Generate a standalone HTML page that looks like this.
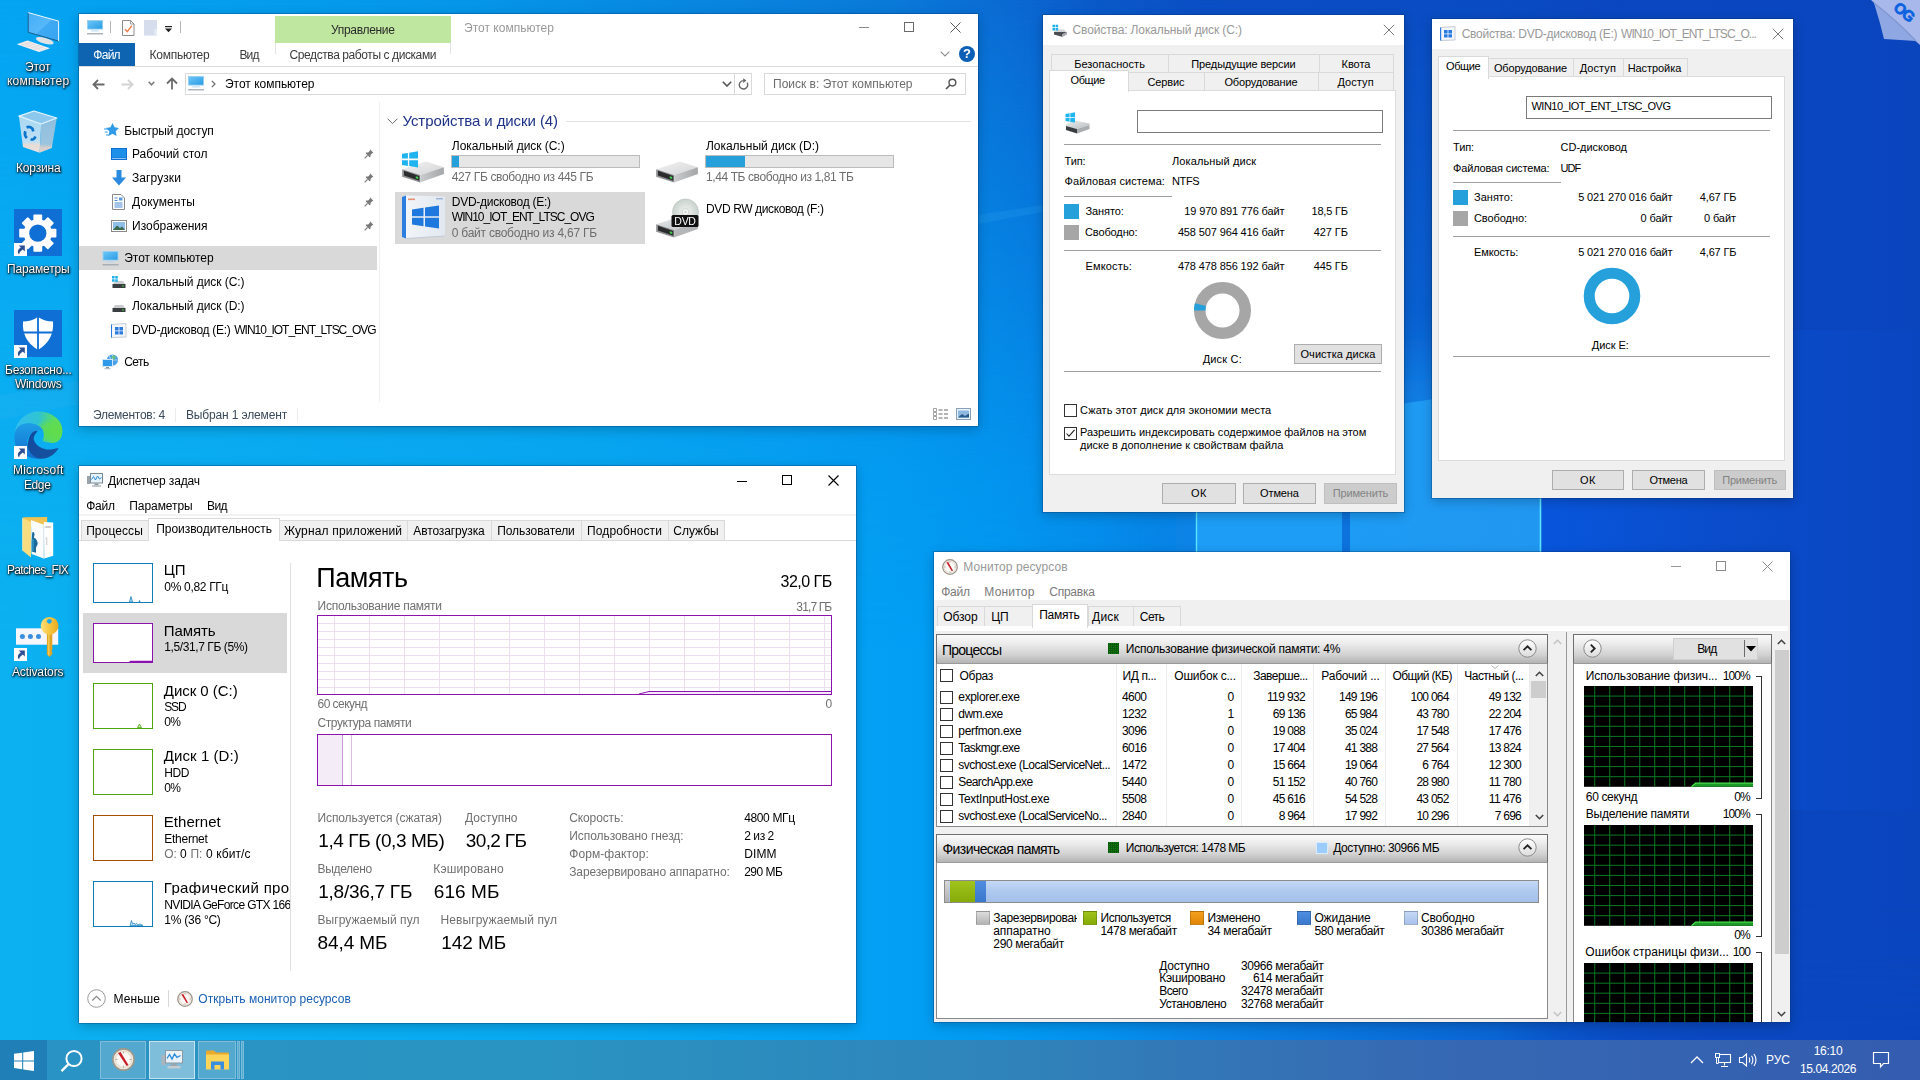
<!DOCTYPE html>
<html><head><meta charset="utf-8">
<style>
*{box-sizing:border-box;margin:0;padding:0}
html,body{width:1920px;height:1080px;overflow:hidden}
body{font-family:"Liberation Sans",sans-serif;font-size:12px;color:#000;position:relative;
background:
 linear-gradient(90deg,#12a9ef 0px,#0ea2ee 500px,#0b8fec 900px,#0a7de4 1150px,#0b6ad8 1250px,#0b55c8 1560px,#0a4ec4 1920px);}
.abs{position:absolute}
.win{position:absolute;background:#fff;box-shadow:0 0 0 1px rgba(0,50,110,.32),0 3px 11px rgba(0,0,0,.24)}
.t{position:absolute;white-space:nowrap;line-height:1}
/* wallpaper */
#wp{position:absolute;left:0;top:0;width:1920px;height:1080px;overflow:hidden}
/* taskbar */
#tb{position:absolute;left:0;top:1040px;width:1920px;height:40px;
 background:linear-gradient(90deg,#2a93c5 0,#2994c2 520px,#2f84bb 1000px,#366ab3 1400px,#345cb0 1920px)}
</style></head><body>
<div id="wp">
<div class="abs" style="left:0;top:0;width:1920px;height:1080px;background:linear-gradient(90deg,#0cb1f1 0,#08a9f2 600px,#03a0f5 880px,#029af2 1000px,#0491ee 1100px,#0983e5 1200px,#0a62d2 1520px,#0a50c6 1700px,#0a49c1 1920px)"></div>
<div class="abs" style="left:0;top:0;width:1920px;height:1080px;background:linear-gradient(90deg,#04a4f2 0,#0595e8 480px,#0a78d8 900px,#0a69d2 1010px,#0a58c8 1100px,#0a4ec4 1200px,#0a47be 1920px);-webkit-mask-image:linear-gradient(180deg,#000 0,rgba(0,0,0,.55) 230px,rgba(0,0,0,.12) 470px,transparent 650px);mask-image:linear-gradient(180deg,#000 0,rgba(0,0,0,.55) 230px,rgba(0,0,0,.12) 470px,transparent 650px)"></div>
<div class="abs" style="left:1500px;top:0;width:420px;height:1080px;background:linear-gradient(90deg,rgba(10,71,192,0) 0,#0a47c0 130px,#0a45be 420px);-webkit-mask-image:linear-gradient(180deg,#000 0,#000 900px,rgba(0,0,0,.7) 1080px)"></div>
<svg class="abs" style="left:0;top:0" width="1920" height="1080" viewBox="0 0 1920 1080">
<defs><filter id="bl" x="-20%" y="-20%" width="140%" height="140%"><feGaussianBlur stdDeviation="30"/></filter>
<linearGradient id="pg" x1="0" y1="0" x2="1" y2="0"><stop offset="0" stop-color="#1d9cf5"/><stop offset="1" stop-color="#2197f1"/></linearGradient></defs>
<polygon points="1196,395 1545,340 1545,790 1196,745" fill="#1590f0" opacity=".6" filter="url(#bl)"/>
<polygon points="0,395 978,215 1043,205 1043,212 978,224 0,420" fill="#3fb4f4" opacity=".16"/>
<polygon points="1196,432 1342,412 1342,720 1196,705" fill="#1d9df6"/>
<polygon points="1342,412 1350,411 1350,722 1342,720" fill="#0d72dc"/>
<polygon points="1350,411 1540,384 1540,760 1350,722" fill="url(#pg)"/>
<line x1="1196.5" y1="432" x2="1196.500" y2="705" stroke="#5ae6fa" stroke-width="1.4"/>
<defs><linearGradient id="rg" x1="0" y1="0" x2="1" y2="0"><stop offset="0" stop-color="#0856dc"/><stop offset=".45" stop-color="#0a4dcc"/><stop offset="1" stop-color="#0a45c0"/></linearGradient></defs>
<rect x="1541" y="330" width="379" height="480" fill="url(#rg)"/>
<line x1="1540.5" y1="384" x2="1540.500" y2="760" stroke="#5ae6fa" stroke-width="1.6"/>
</svg>
<svg class="abs" style="left:1866px;top:0" width="54" height="48" viewBox="0 0 54 48">
<polygon points="5,0 54,0 54,45" fill="#a9b8ea"/>
<path d="M8 3Q14 22 18 39L50 41Q30 20 8 3z" fill="#8fa8e3"/><path d="M8 3Q30 20 50 41" fill="none" stroke="#7f96d2" stroke-width="1.2"/>
<g transform="translate(38 12) rotate(40)"><text x="0" y="5" text-anchor="middle" font-family="Liberation Sans" font-weight="bold" font-size="15" fill="#0a62e0" stroke="#0a62e0" stroke-width=".8" letter-spacing="-1">OG</text></g>
</svg>
</div>
<svg class="abs" style="left:14px;top:8px;" width="50" height="46" viewBox="0 0 50 46"><defs><linearGradient id="pc1" x1="0" y1="0" x2="1" y2="1"><stop offset="0" stop-color="#45aef6"/><stop offset=".5" stop-color="#56b8fa"/><stop offset=".52" stop-color="#3fa9f3"/><stop offset="1" stop-color="#38a4f0"/></linearGradient></defs>
<g transform="rotate(16 30.8 32.8)"><ellipse cx="30.8" cy="32.8" rx="9.200" ry="2.900" fill="#dfe3e6"/></g>
<path d="M14.2 4.6 44.600 13.100V33.100L14.200 24.300z" fill="url(#pc1)"/>
<path d="M14.2 4.600V24.300L44.600 33.100" fill="none" stroke="#1d5f8f" stroke-width="1"/><path d="M14.2 4.600 44.600 13.100V33.100" fill="none" stroke="#eaf6fe" stroke-width="1"/>
<path d="M2.8 36.200 13.500 32.600 36 40.300 25.100 44z" fill="#f2f5f8"/>
<g stroke="#d9c8c4" stroke-width=".5" fill="none"><path d="M5.500 35.300 27.800 43.100M8.200 34.400 30.500 42.200M10.800 33.500 33.200 41.300"/><path d="M7 37.600 17.700 34M11.200 39.100 21.900 35.500M15.400 40.600 26.100 37M19.600 42.100 30.300 38.500"/></g></svg>
<div class="t" style="left:24.80px;top:60.84px;font-size:12px;color:#fff;letter-spacing:-0.102px;text-shadow:0 0 1px #000,1px 1px 2px #000,0 1px 3px rgba(0,0,0,.8);will-change:transform;">Этот</div>
<div class="t" style="left:6.60px;top:75.04px;font-size:12px;color:#fff;letter-spacing:0.209px;text-shadow:0 0 1px #000,1px 1px 2px #000,0 1px 3px rgba(0,0,0,.8);will-change:transform;">компьютер</div>
<svg class="abs" style="left:18px;top:109px;" width="40" height="46" viewBox="0 0 40 46"><defs><linearGradient id="rbl" x1="0" y1="0" x2="0" y2="1"><stop offset="0" stop-color="#a9d7f3"/><stop offset=".7" stop-color="#bfe0f4"/><stop offset=".78" stop-color="#e6dcd8"/><stop offset="1" stop-color="#e9e2de"/></linearGradient>
<linearGradient id="rbr" x1="0" y1="0" x2="0" y2="1"><stop offset="0" stop-color="#8dbfe0"/><stop offset=".75" stop-color="#9cc4de"/><stop offset=".85" stop-color="#d6cfcc"/><stop offset="1" stop-color="#d8d2d0"/></linearGradient></defs>
<path d="M.9 7.200 23.200 15 21.600 43.800 5 38z" fill="url(#rbl)"/><path d="M23.200 15 38.800 9 33.800 39.100 21.600 43.800z" fill="url(#rbr)"/>
<path d="M.9 7.200 15.900 2 38.800 9 23.200 15z" fill="#8cc8ee" stroke="#e4f4fd" stroke-width="1.300" stroke-linejoin="round"/>
<g fill="none" stroke="#0b74cc" stroke-width="2.700"><path d="M8.600 18.500Q11.500 17 14.500 19.800L15.300 22.400"/><path d="M7.300 22.200Q6 26 8.800 29.200"/><path d="M12.600 30.200Q16 31.500 17.400 27.500"/></g></svg>
<div class="t" style="left:15.66px;top:161.74px;font-size:12px;color:#fff;letter-spacing:-0.174px;text-shadow:0 0 1px #000,1px 1px 2px #000,0 1px 3px rgba(0,0,0,.8);will-change:transform;">Корзина</div>
<div class="abs" style="left:14.3px;top:209px;width:47.7px;height:46.7px;background:#0f6fd4;"></div>
<svg class="abs" style="left:14.3px;top:209px;" width="48" height="47" viewBox="0 0 48 47"><g transform="translate(23.8,24.2)"><g fill="#fff"><rect x="-4.4" y="-18.6" width="8.8" height="9" rx=".8" transform="rotate(0)"/><rect x="-4.4" y="-18.6" width="8.8" height="9" rx=".8" transform="rotate(45)"/><rect x="-4.4" y="-18.6" width="8.8" height="9" rx=".8" transform="rotate(90)"/><rect x="-4.4" y="-18.6" width="8.8" height="9" rx=".8" transform="rotate(135)"/><rect x="-4.4" y="-18.6" width="8.8" height="9" rx=".8" transform="rotate(180)"/><rect x="-4.4" y="-18.6" width="8.8" height="9" rx=".8" transform="rotate(225)"/><rect x="-4.4" y="-18.6" width="8.8" height="9" rx=".8" transform="rotate(270)"/><rect x="-4.4" y="-18.6" width="8.8" height="9" rx=".8" transform="rotate(315)"/><circle r="14"/></g><circle r="8.6" fill="#0f6fd4"/></g></svg>
<svg class="abs" style="left:14.3px;top:243px;" width="13" height="13" viewBox="0 0 13 13"><rect width="13" height="13" fill="#fbfbfb"/><path d="M4.800 2.400H10.800V8.400L8.800 6.400Q5.800 8 5 11.600Q2 7.500 6.800 4.400z" fill="#2c4f94"/></svg>
<div class="t" style="left:6.87px;top:262.64px;font-size:12px;color:#fff;letter-spacing:-0.163px;text-shadow:0 0 1px #000,1px 1px 2px #000,0 1px 3px rgba(0,0,0,.8);will-change:transform;">Параметры</div>
<div class="abs" style="left:14.3px;top:310.2px;width:47.7px;height:47.2px;background:#0f6fd4;"></div>
<svg class="abs" style="left:14.3px;top:310.2px;" width="48" height="47" viewBox="0 0 48 47"><path d="M24 7Q17 11.5 9 11.5 7.5 30 24 40 40.5 30 39 11.5 31 11.5 24 7z" fill="#fff"/><path d="M24 6V41M8 22.5H40" stroke="#0f6fd4" stroke-width="1.8"/></svg>
<svg class="abs" style="left:14.3px;top:344.5px;" width="13" height="13" viewBox="0 0 13 13"><rect width="13" height="13" fill="#fbfbfb"/><path d="M4.800 2.400H10.800V8.400L8.800 6.400Q5.800 8 5 11.600Q2 7.500 6.800 4.400z" fill="#2c4f94"/></svg>
<div class="t" style="left:4.56px;top:363.54px;font-size:12px;color:#fff;letter-spacing:-0.176px;text-shadow:0 0 1px #000,1px 1px 2px #000,0 1px 3px rgba(0,0,0,.8);will-change:transform;">Безопасно...</div>
<div class="t" style="left:14.68px;top:378.04px;font-size:12px;color:#fff;letter-spacing:-0.341px;text-shadow:0 0 1px #000,1px 1px 2px #000,0 1px 3px rgba(0,0,0,.8);will-change:transform;">Windows</div>
<svg class="abs" style="left:13.5px;top:410.5px;" width="50" height="50" viewBox="0 0 50 50"><defs><linearGradient id="e1" x1="0" y1="0" x2="1" y2="0"><stop offset="0" stop-color="#33bdf0"/><stop offset=".5" stop-color="#2fc4d4"/><stop offset=".8" stop-color="#55d870"/><stop offset="1" stop-color="#6fe04a"/></linearGradient>
<radialGradient id="e1b" cx=".82" cy=".62" r=".42"><stop offset="0" stop-color="#62dc4a"/><stop offset=".6" stop-color="#5fdc50" stop-opacity=".8"/><stop offset="1" stop-color="#5fdc50" stop-opacity="0"/></radialGradient>
<linearGradient id="e2" x1="0" y1="0" x2="0" y2="1"><stop offset="0" stop-color="#1e9ee6"/><stop offset="1" stop-color="#136fd0"/></linearGradient>
<linearGradient id="e3" x1="0" y1="0" x2="1" y2="1"><stop offset="0" stop-color="#124a9e"/><stop offset="1" stop-color="#17529f"/></linearGradient></defs>
<path d="M.8 22.400C2 8 14 .4 24.200 .4C38 .4 48.300 9 48.300 19.600C48.300 28 44 32 38 32C32 32 28.600 30.500 28.600 29.100C30 27 30.500 24 29.200 19.600C27 14 20 12 12 12.500C6 14 2 18 .8 22.400Z" fill="url(#e1)"/>
<path d="M.8 22.400C2 8 14 .4 24.200 .4C38 .4 48.300 9 48.300 19.600C48.300 28 44 32 38 32C32 32 28.600 30.500 28.600 29.100C30 27 30.500 24 29.200 19.600C27 14 20 12 12 12.500C6 14 2 18 .8 22.400Z" fill="url(#e1b)"/>
<path d="M.8 22.400C2 16 7 12.400 12 12.400C18 11.500 25 13 29.200 19.600C26 19 21 19.500 18.600 21.300C13 25 12.500 31 13.900 34C15 40 19 45 25.800 47.700C16 48.500 6 42 1.900 35.200C.3 31 .2 26 .8 22.400Z" fill="url(#e2)"/>
<path d="M18.600 21.300C20 20.300 22 19.800 23.600 20.200C20 24 19 27 20.300 30C23 36 30 39 37 38.500C41 38 43.500 37.300 44.700 36.800C41 44 33 48.500 25.800 47.700C18 46 13 39 13.900 32.400C14.500 27 16 23.500 18.600 21.300Z" fill="url(#e3)"/></svg>
<svg class="abs" style="left:14.3px;top:446px;" width="13" height="13" viewBox="0 0 13 13"><rect width="13" height="13" fill="#fbfbfb"/><path d="M4.800 2.400H10.800V8.400L8.800 6.400Q5.800 8 5 11.600Q2 7.500 6.800 4.400z" fill="#2c4f94"/></svg>
<div class="t" style="left:12.65px;top:464.14px;font-size:12px;color:#fff;letter-spacing:0.201px;text-shadow:0 0 1px #000,1px 1px 2px #000,0 1px 3px rgba(0,0,0,.8);will-change:transform;">Microsoft</div>
<div class="t" style="left:24.20px;top:479.44px;font-size:12px;color:#fff;letter-spacing:-0.408px;text-shadow:0 0 1px #000,1px 1px 2px #000,0 1px 3px rgba(0,0,0,.8);will-change:transform;">Edge</div>
<svg class="abs" style="left:21px;top:515px;" width="35" height="45" viewBox="0 0 35 45"><path d="M1.700 2.200 26.100 1.900V12L10 12z" fill="#efc252"/>
<path d="M10 4.900 22.800 9.700V43.600L10.600 39.100z" fill="#fbfcfe"/><path d="M22.800 6.900 32.200 7.400V40.800L23.300 43.600z" fill="#fff"/><path d="M22.800 9.700V43.600" stroke="#dfe5ee" stroke-width=".8"/>
<path d="M11.200 17.500Q13 16 13.600 19.500L12.800 22.500Q16.500 24 16.700 29L15 32.500V37.800L10.800 36.500Q10.400 26 11.200 17.500z" fill="#1b6a9c"/><path d="M12 24V36" stroke="#39a0d0" stroke-width="1.200"/>
<path d="M24.200 12H29.800" stroke="#9a9088" stroke-width=".9"/><path d="M24.500 23.500 25.800 22.500V30" stroke="#c9c4cc" stroke-width=".9" fill="none"/>
<path d="M1.700 3 10 6.900V42.400L1.700 35.800z" fill="#f7dc80"/><path d="M1.700 3V35.800" stroke="#fbeaa8" stroke-width=".9"/></svg>
<div class="t" style="left:7.10px;top:564.44px;font-size:12px;color:#fff;letter-spacing:-0.691px;text-shadow:0 0 1px #000,1px 1px 2px #000,0 1px 3px rgba(0,0,0,.8);will-change:transform;">Patches_FIX</div>
<svg class="abs" style="left:15px;top:616px;" width="46" height="45" viewBox="0 0 46 45"><defs><linearGradient id="ky" x1="0" y1="0" x2="1" y2="0"><stop offset="0" stop-color="#fbe07a"/><stop offset=".5" stop-color="#f6c640"/><stop offset="1" stop-color="#e9aa22"/></linearGradient></defs>
<rect x="1" y="12.300" width="42.200" height="16.400" fill="#f5f6fc"/><circle cx="7.400" cy="20.600" r="2.500" fill="#3a8ee0"/><circle cx="15.400" cy="20.600" r="2.500" fill="#3a8ee0"/><circle cx="23.500" cy="20.600" r="2.500" fill="#3a8ee0"/>
<path d="M31.900 17V38.500L34.600 41 37.300 38V36L36.300 35 37.300 34V17z" fill="#e2a526"/><path d="M33.800 17V39.500" stroke="#f7d25c" stroke-width="1.200"/>
<circle cx="34.600" cy="9.800" r="8.900" fill="url(#ky)"/><circle cx="34.300" cy="5.300" r="2.400" fill="#18a8f4"/></svg>
<svg class="abs" style="left:14.3px;top:648px;" width="13" height="13" viewBox="0 0 13 13"><rect width="13" height="13" fill="#fbfbfb"/><path d="M4.800 2.400H10.800V8.400L8.800 6.400Q5.800 8 5 11.600Q2 7.500 6.800 4.400z" fill="#2c4f94"/></svg>
<div class="t" style="left:12.44px;top:665.84px;font-size:12px;color:#fff;letter-spacing:-0.129px;text-shadow:0 0 1px #000,1px 1px 2px #000,0 1px 3px rgba(0,0,0,.8);will-change:transform;">Activators</div>
<div class="win" style="left:79px;top:14px;width:899px;height:412px"></div>
<svg class="abs" style="left:87px;top:20px;" width="16" height="14.6" viewBox="0 0 16 14.6"><defs><linearGradient id="mg75836" x1="0" y1="0" x2="1" y2="1"><stop offset="0" stop-color="#6cc6f6"/><stop offset="1" stop-color="#2a9ce6"/></linearGradient></defs>
<rect x="0" y="0" width="16" height="9.6" fill="#9fd2f2"/><rect x="0.9" y="0.9" width="14.2" height="7.8" fill="url(#mg75836)"/>
<rect x="4.2" y="10.4" width="7.6" height="1" fill="#b4d6ee"/><rect x="0" y="13.2" width="16" height="1.2" fill="#9ba3ab"/></svg>
<div class="abs" style="left:110px;top:21px;width:1px;height:12px;background:#b5b5b5;"></div>
<svg class="abs" style="left:122px;top:20px;" width="12.5" height="16" viewBox="0 0 12.5 16"><path d="M.5 .5h8l3.500 3.500v11.500h-11.500z" fill="#fff" stroke="#8c8c8c"/><path d="M8.500 .5v3.500h3.500" fill="none" stroke="#8c8c8c" stroke-width=".8"/><path d="M3 9.200 5.300 11.600 9.800 5.800" fill="none" stroke="#ef7d4f" stroke-width="1.400"/></svg>
<svg class="abs" style="left:144px;top:20px;" width="13" height="15.6" viewBox="0 0 13 15.6"><rect width="13" height="15.600" fill="#d6deee"/><rect x="10.400" y="9" width="2.600" height="6.600" fill="#e6ecf6"/></svg>
<svg class="abs" style="left:165px;top:25.5px;" width="7" height="7" viewBox="0 0 7 7"><rect x="0" y="0" width="7" height="1.200" fill="#222"/><path d="M0 2.600h7L3.500 6.200z" fill="#222"/></svg>
<div class="abs" style="left:180px;top:21px;width:1px;height:12px;background:#b5b5b5;"></div>
<div class="abs" style="left:275px;top:16px;width:176px;height:27px;background:#c0e79f;"></div>
<div class="t" style="left:331.09px;top:24.14px;font-size:12px;color:#2a2a2a;letter-spacing:-0.322px;">Управление</div>
<div class="t" style="left:464.00px;top:22.14px;font-size:12px;color:#9a9a9a;letter-spacing:0.019px;">Этот компьютер</div>
<div class="abs" style="left:859px;top:27px;width:10px;height:1px;background:#8a8a8a;"></div>
<div class="abs" style="left:904px;top:22px;width:10px;height:10px;border:1px solid #6a6a6a;"></div>
<svg class="abs" style="left:950px;top:22px;" width="11" height="11" viewBox="0 0 11 11"><path d="M.5 .5 10.5 10.5M10.5 .5 .5 10.5" stroke="#555" stroke-width="1"/></svg>
<div class="abs" style="left:79px;top:43px;width:56px;height:23px;background:#0f64b2;"></div>
<div class="t" style="left:93.37px;top:49.14px;font-size:12px;color:#fff;letter-spacing:-0.754px;">Файл</div>
<div class="t" style="left:149.50px;top:49.14px;font-size:12px;color:#3b3b3b;letter-spacing:-0.234px;">Компьютер</div>
<div class="t" style="left:239.50px;top:49.14px;font-size:12px;color:#3b3b3b;letter-spacing:-0.906px;">Вид</div>
<div class="abs" style="left:275px;top:43px;width:1px;height:11px;background:#e3e3e3;"></div>
<div class="abs" style="left:450px;top:43px;width:1px;height:11px;background:#e3e3e3;"></div>
<div class="t" style="left:289.54px;top:49.14px;font-size:12px;color:#3b3b3b;letter-spacing:-0.411px;">Средства работы с дисками</div>
<svg class="abs" style="left:940px;top:51px;" width="10" height="6" viewBox="0 0 10 6"><path d="M.7 .7 5 5 9.3 .7" fill="none" stroke="#8a8a8a" stroke-width="1.1"/></svg>
<svg class="abs" style="left:958px;top:45px;" width="18" height="18" viewBox="0 0 18 18"><circle cx="9" cy="9" r="8" fill="#0c5fb6"/><text x="9" y="13.4" text-anchor="middle" font-family="Liberation Sans" font-weight="bold" font-size="13" fill="#fff">?</text></svg>
<div class="abs" style="left:79px;top:66px;width:899px;height:1px;background:#dadbdc;"></div>
<svg class="abs" style="left:92px;top:79px;" width="13" height="11" viewBox="0 0 13 11"><path d="M12.5 5.5H1.500M6 1 1.500 5.500 6 10" fill="none" stroke="#6b6b6b" stroke-width="1.800"/></svg>
<svg class="abs" style="left:121px;top:79px;" width="13" height="11" viewBox="0 0 13 11"><path d="M.5 5.5H11.500M7 1 11.500 5.500 7 10" fill="none" stroke="#d4d4d4" stroke-width="1.800"/></svg>
<svg class="abs" style="left:148px;top:81px;" width="7" height="5" viewBox="0 0 7 5"><path d="M.7 .8 3.500 3.800 6.300 .8" fill="none" stroke="#7a7a7a" stroke-width="1.500"/></svg>
<svg class="abs" style="left:166px;top:77px;" width="12" height="13" viewBox="0 0 12 13"><path d="M6 12.500V1.500M1 6.500 6 1.500 11 6.500" fill="none" stroke="#6b6b6b" stroke-width="1.800"/></svg>
<div class="abs" style="left:185px;top:73px;width:550px;height:22px;border:1px solid #d9d9d9;"></div>
<div class="abs" style="left:734px;top:73px;width:18px;height:22px;border:1px solid #d9d9d9;"></div>
<svg class="abs" style="left:188px;top:76px;" width="16" height="14.6" viewBox="0 0 16 14.6"><defs><linearGradient id="mg11883" x1="0" y1="0" x2="1" y2="1"><stop offset="0" stop-color="#6cc6f6"/><stop offset="1" stop-color="#2a9ce6"/></linearGradient></defs>
<rect x="0" y="0" width="16" height="9.6" fill="#9fd2f2"/><rect x="0.9" y="0.9" width="14.2" height="7.8" fill="url(#mg11883)"/>
<rect x="4.2" y="10.4" width="7.6" height="1" fill="#b4d6ee"/><rect x="0" y="13.2" width="16" height="1.2" fill="#9ba3ab"/></svg>
<svg class="abs" style="left:211px;top:80px;" width="5" height="8" viewBox="0 0 5 8"><path d="M.8 .8 4 4 .8 7.2" fill="none" stroke="#6a6a6a" stroke-width="1.2"/></svg>
<div class="t" style="left:225.00px;top:78.14px;font-size:12px;color:#000;letter-spacing:-0.017px;">Этот компьютер</div>
<svg class="abs" style="left:722px;top:81px;" width="10" height="6" viewBox="0 0 10 6"><path d="M.8 .8 5 5 9.2 .8" fill="none" stroke="#555" stroke-width="1.6"/></svg>
<svg class="abs" style="left:738px;top:78px;" width="11" height="12" viewBox="0 0 11 12"><path d="M9.140 4.700A4.200 4.200 0 1 1 5.500 2.600" fill="none" stroke="#666" stroke-width="1.400"/><path d="M5.200 .2 8.400 2.600 5.200 5z" fill="#666"/></svg>
<div class="abs" style="left:764px;top:73px;width:202px;height:22px;border:1px solid #d9d9d9;"></div>
<div class="t" style="left:773.00px;top:78.14px;font-size:12px;color:#6d6d6d;letter-spacing:0.006px;">Поиск в: Этот компьютер</div>
<svg class="abs" style="left:945px;top:78px;" width="12" height="12" viewBox="0 0 12 12"><circle cx="7.4" cy="4.6" r="3.4" fill="none" stroke="#555" stroke-width="1.4"/><path d="M5 7 1 11" stroke="#555" stroke-width="1.7"/></svg>
<div class="abs" style="left:379px;top:102px;width:1px;height:300px;background:#f0f0f0;"></div>
<svg class="abs" style="left:104px;top:123px;" width="15" height="14" viewBox="0 0 15 14"><path d="M8.5 0 10.6 4.3 15 5 11.7 8.2 12.6 13 8.5 10.7 4.6 13 5.4 8.2 2 5 6.5 4.3z" fill="#2f9be8"/><path d="M0 6h4M.8 9h3M2 12h3" stroke="#2f9be8" stroke-width="1.1"/></svg>
<div class="t" style="left:124.20px;top:124.64px;font-size:12px;color:#000;letter-spacing:-0.117px;">Быстрый доступ</div>
<svg class="abs" style="left:111px;top:148px;" width="16" height="12" viewBox="0 0 16 12"><rect x="0" y="0" width="16" height="12" fill="#0d6fd1"/><rect x="1" y="1" width="14" height="8.6" fill="#1f90e8"/><rect x="1" y="10" width="14" height="1" fill="#8fc4f3" stroke-dasharray="2 1"/></svg>
<div class="t" style="left:132.00px;top:148.14px;font-size:12px;color:#000;letter-spacing:0.014px;">Рабочий стол</div>
<svg class="abs" style="left:111px;top:170px;" width="16" height="16" viewBox="0 0 16 16"><path d="M5.5 0h5v7.5h4.5L8 15.5 1 7.5h4.5z" fill="#2a8ae0"/></svg>
<div class="t" style="left:132.00px;top:172.14px;font-size:12px;color:#000;letter-spacing:0.088px;">Загрузки</div>
<svg class="abs" style="left:112px;top:194px;" width="13" height="16" viewBox="0 0 13 16"><path d="M.5 .5h8.5l3.5 3.5v11.5h-12z" fill="#fff" stroke="#8a8a8a"/><path d="M2.5 4h3M2.5 6.5h3M2.5 9h8M2.5 11h8M2.5 13h8" stroke="#4a8ad4" stroke-width="1"/><path d="M7 3.5h3.5v3H7z" fill="#5a9be0"/></svg>
<div class="t" style="left:132.00px;top:196.14px;font-size:12px;color:#000;letter-spacing:0.127px;">Документы</div>
<svg class="abs" style="left:111px;top:220px;" width="16" height="12" viewBox="0 0 16 12"><rect x=".5" y=".5" width="15" height="11" fill="#fff" stroke="#8a8a8a"/><rect x="2" y="2" width="12" height="8" fill="#8fc0ea"/><path d="M2 10 6 5.5 9 8 11 6.5 14 10z" fill="#3a6a4a"/></svg>
<div class="t" style="left:132.00px;top:220.14px;font-size:12px;color:#000;letter-spacing:0.007px;">Изображения</div>
<svg class="abs" style="left:364px;top:149px;" width="10" height="10" viewBox="0 0 10 10"><path d="M6.2 .6 9.4 3.8 8.3 4.2 6.6 5.9 6.4 8 5.5 8.2 1.8 4.5 2 3.600 4.1 3.4 5.8 1.700z" fill="#7a7a7a"/><path d="M3.600 6.4 .6 9.4" stroke="#7a7a7a" stroke-width="1.1"/></svg>
<svg class="abs" style="left:364px;top:173px;" width="10" height="10" viewBox="0 0 10 10"><path d="M6.2 .6 9.4 3.8 8.3 4.2 6.6 5.9 6.4 8 5.5 8.2 1.8 4.5 2 3.600 4.1 3.4 5.8 1.700z" fill="#7a7a7a"/><path d="M3.600 6.4 .6 9.4" stroke="#7a7a7a" stroke-width="1.1"/></svg>
<svg class="abs" style="left:364px;top:197px;" width="10" height="10" viewBox="0 0 10 10"><path d="M6.2 .6 9.4 3.8 8.3 4.2 6.6 5.9 6.4 8 5.5 8.2 1.8 4.5 2 3.600 4.1 3.4 5.8 1.700z" fill="#7a7a7a"/><path d="M3.600 6.4 .6 9.4" stroke="#7a7a7a" stroke-width="1.1"/></svg>
<svg class="abs" style="left:364px;top:221px;" width="10" height="10" viewBox="0 0 10 10"><path d="M6.2 .6 9.4 3.8 8.3 4.2 6.6 5.9 6.4 8 5.5 8.2 1.8 4.5 2 3.600 4.1 3.4 5.8 1.700z" fill="#7a7a7a"/><path d="M3.600 6.4 .6 9.4" stroke="#7a7a7a" stroke-width="1.1"/></svg>
<div class="abs" style="left:79px;top:246px;width:298px;height:24px;background:#d9d9d9;"></div>
<svg class="abs" style="left:102px;top:251px;" width="17" height="14.6" viewBox="0 0 16 14.6"><defs><linearGradient id="mg41265" x1="0" y1="0" x2="1" y2="1"><stop offset="0" stop-color="#6cc6f6"/><stop offset="1" stop-color="#2a9ce6"/></linearGradient></defs>
<rect x="0" y="0" width="16" height="9.6" fill="#9fd2f2"/><rect x="0.9" y="0.9" width="14.2" height="7.8" fill="url(#mg41265)"/>
<rect x="4.2" y="10.4" width="7.6" height="1" fill="#b4d6ee"/><rect x="0" y="13.2" width="16" height="1.2" fill="#9ba3ab"/></svg>
<div class="t" style="left:124.20px;top:252.14px;font-size:12px;color:#000;letter-spacing:-0.017px;">Этот компьютер</div>
<svg class="abs" style="left:111px;top:275px;" width="16" height="14" viewBox="0 0 16 14"><path d="M2 9 4 6h8l2 3z" fill="#c9cdd0"/><rect x="1.5" y="9" width="13" height="4" fill="#3a3d40"/><rect x="11" y="10.5" width="2" height="1" fill="#3fd23f"/><path d="M1 1h2.6v2.6H1zM4.2 1h2.6v2.6H4.2zM1 4.2h2.6v2.6H1zM4.2 4.2h2.6v2.6H4.2z" fill="#1fb0ea"/></svg>
<div class="t" style="left:132.00px;top:276.14px;font-size:12px;color:#000;letter-spacing:-0.056px;">Локальный диск (C:)</div>
<svg class="abs" style="left:111px;top:299px;" width="16" height="14" viewBox="0 0 16 14"><path d="M2 9 4 6h8l2 3z" fill="#c9cdd0"/><rect x="1.5" y="9" width="13" height="4" fill="#3a3d40"/><rect x="11" y="10.5" width="2" height="1" fill="#3fd23f"/></svg>
<div class="t" style="left:132.00px;top:300.14px;font-size:12px;color:#000;letter-spacing:-0.056px;">Локальный диск (D:)</div>
<svg class="abs" style="left:111px;top:323px;" width="16" height="15" viewBox="0 0 16 15"><path d="M.5 1.5 15 .5V14L.5 14.5z" fill="#f4f6f9" stroke="#b8c0cc" stroke-width=".8"/><path d="M4 4h3.6v3.4H4zM8.4 4H12v3.4H8.4zM4 8.2h3.6v3.4H4zM8.4 8.2H12v3.4H8.4z" fill="#2a7be0"/><path d="M.5 1.5v13" stroke="#2a7be0" stroke-width="1"/></svg>
<div class="t" style="left:132.00px;top:324.14px;font-size:12px;color:#000;letter-spacing:-0.290px;">DVD-дисковод (E:)</div>
<div class="t" style="left:234.30px;top:324.14px;font-size:12px;color:#000;letter-spacing:-1.029px;">WIN10_IOT_ENT_LTSC_OVG</div>
<svg class="abs" style="left:102px;top:354px;" width="17" height="16" viewBox="0 0 17 16"><circle cx="10.5" cy="6" r="5.6" fill="#4aa0e6"/><path d="M7 2q3.5 4 0 8M5 6h11M10.5 .5v11" stroke="#bfe0f8" stroke-width=".8" fill="none"/><path d="M9 3 12 1 14 3 12.5 6z" fill="#6bc26b" opacity=".8"/><rect x=".5" y="5.5" width="10" height="7" fill="#2f9be8" stroke="#cfe6f8" stroke-width="1"/><rect x="4" y="13" width="3" height="1.2" fill="#8a969e"/><rect x="2.5" y="14.2" width="6" height="1" fill="#aab4bb"/></svg>
<div class="t" style="left:124.20px;top:356.14px;font-size:12px;color:#000;letter-spacing:-0.551px;">Сеть</div>
<svg class="abs" style="left:387px;top:118px;" width="11" height="7" viewBox="0 0 11 7"><path d="M.6 .7 5.5 5.6 10.4 .7" fill="none" stroke="#6a6a6a" stroke-width="1"/></svg>
<div class="t" style="left:402.50px;top:113.17px;font-size:15px;color:#1e3287;letter-spacing:-0.080px;">Устройства и диски (4)</div>
<div class="abs" style="left:566px;top:121px;width:405px;height:1px;background:#e2e2e2;"></div>
<svg class="abs" style="left:401px;top:150px;" width="44" height="34" viewBox="0 0 44 34"><defs><linearGradient id="dtc" x1="0" y1="0" x2="1" y2="1"><stop offset="0" stop-color="#f2f2f3"/><stop offset="1" stop-color="#d4d5d6"/></linearGradient>
<linearGradient id="drc" x1="0" y1="0" x2="1" y2="0"><stop offset="0" stop-color="#cbcccd"/><stop offset="1" stop-color="#a4a6a8"/></linearGradient></defs>
<path d="M1.200 19.300 25 11.400 42.900 17.200 19.100 25z" fill="url(#dtc)"/>
<path d="M1.200 19.300 19.100 25V32.600L1.200 26.700z" fill="#8d8f91"/>
<path d="M3 20.700 18.300 25.900V30.700L3 25.600z" fill="#2b2c2e"/>
<path d="M19.100 25 42.900 17.200V24L19.100 32.600z" fill="url(#drc)"/>
<path d="M14.800 26.300 17.200 27.100V29.100L14.800 28.300z" fill="#41d64c"/><path d="M1 3.700 6.900 2.900V8.600H1zM8.200 2.700 17 1.250V8.600H8.200zM1 10.200H6.900V15.900L1 15.100zM8.200 10.200H17V17.600L8.200 16.100z" fill="#1fb4ee"/></svg>
<div class="t" style="left:451.80px;top:140.14px;font-size:12px;color:#000;letter-spacing:-0.040px;">Локальный диск (C:)</div>
<div class="abs" style="left:451px;top:155px;width:189px;height:13px;background:#e6e6e6;border:1px solid #bcbcbc;"></div>
<div class="abs" style="left:452px;top:156px;width:7px;height:11px;background:#26a0da;"></div>
<div class="t" style="left:451.80px;top:171.14px;font-size:12px;color:#6d6d6d;letter-spacing:-0.347px;">427 ГБ свободно из 445 ГБ</div>
<svg class="abs" style="left:655px;top:150px;" width="44" height="34" viewBox="0 0 44 34"><defs><linearGradient id="dtd" x1="0" y1="0" x2="1" y2="1"><stop offset="0" stop-color="#f2f2f3"/><stop offset="1" stop-color="#d4d5d6"/></linearGradient>
<linearGradient id="drd" x1="0" y1="0" x2="1" y2="0"><stop offset="0" stop-color="#cbcccd"/><stop offset="1" stop-color="#a4a6a8"/></linearGradient></defs>
<path d="M1.200 19.300 25 11.400 42.900 17.200 19.100 25z" fill="url(#dtd)"/>
<path d="M1.200 19.300 19.100 25V32.600L1.200 26.700z" fill="#8d8f91"/>
<path d="M3 20.700 18.300 25.900V30.700L3 25.600z" fill="#2b2c2e"/>
<path d="M19.100 25 42.900 17.200V24L19.100 32.600z" fill="url(#drd)"/>
<path d="M14.800 26.300 17.200 27.100V29.100L14.800 28.300z" fill="#41d64c"/></svg>
<div class="t" style="left:706.00px;top:140.14px;font-size:12px;color:#000;letter-spacing:-0.030px;">Локальный диск (D:)</div>
<div class="abs" style="left:705px;top:155px;width:189px;height:13px;background:#e6e6e6;border:1px solid #bcbcbc;"></div>
<div class="abs" style="left:706px;top:156px;width:39px;height:11px;background:#26a0da;"></div>
<div class="t" style="left:706.00px;top:171.14px;font-size:12px;color:#6d6d6d;letter-spacing:-0.407px;">1,44 ТБ свободно из 1,81 ТБ</div>
<div class="abs" style="left:395px;top:192px;width:250px;height:52px;background:#d9d9d9;"></div>
<svg class="abs" style="left:401px;top:195px;" width="45" height="44" viewBox="0 0 45 44"><defs><linearGradient id="bx" x1="0" y1="0" x2="1" y2="0"><stop offset="0" stop-color="#f3f6fa"/><stop offset="1" stop-color="#e2e8f0"/></linearGradient></defs>
<path d="M1 2 5 .5 44 1.5 44 41 5 43.5 1 42z" fill="url(#bx)"/><path d="M1 2 5 .5V43.5L1 42z" fill="#2b7de0"/>
<path d="M11 14.5 22.5 12.8V21.2H11zM24 12.6 38 10.6V21.2H24zM11 22.7H22.5V31.2L11 29.6zM24 22.7H38V33.4L24 31.4z" fill="#1e78de"/>
<rect x="7" y="3.5" width="7" height="1.6" fill="#e06a3a" opacity=".7"/><rect x="35" y="3" width="7" height="1.4" fill="#9ab4d8"/><path d="M5 43.5 44 41" stroke="#c2cad6" stroke-width="1"/></svg>
<div class="t" style="left:451.80px;top:195.64px;font-size:12px;color:#000;letter-spacing:-0.260px;">DVD-дисковод (E:)</div>
<div class="t" style="left:451.80px;top:210.64px;font-size:12px;color:#000;letter-spacing:-0.992px;">WIN10_IOT_ENT_LTSC_OVG</div>
<div class="t" style="left:451.80px;top:226.64px;font-size:12px;color:#6d6d6d;letter-spacing:-0.240px;">0 байт свободно из 4,67 ГБ</div>
<svg class="abs" style="left:655px;top:198px;" width="44" height="41" viewBox="0 0 44 41"><defs><linearGradient id="dtf" x1="0" y1="0" x2="1" y2="1"><stop offset="0" stop-color="#eceeef"/><stop offset="1" stop-color="#b9bdc0"/></linearGradient><radialGradient id="cd" cx=".5" cy=".5" r=".5"><stop offset="0" stop-color="#fff"/><stop offset=".25" stop-color="#e8ece9"/><stop offset="1" stop-color="#c8d2cc"/></radialGradient></defs>
<circle cx="30.5" cy="14" r="13" fill="url(#cd)" stroke="#b8c0bc" stroke-width=".6"/><circle cx="30.5" cy="14" r="3.4" fill="#f4f6f5" stroke="#b8c0bc" stroke-width=".6"/><circle cx="30.5" cy="14" r="1.2" fill="#cfd6d2"/>
<g transform="translate(0,7)"><path d="M1.200 19.300 25 11.400 42.900 17.200 19.100 25z" fill="url(#dtf)"/><path d="M1.200 19.300 19.100 25V32.600L1.200 26.700z" fill="#8d8f91"/><path d="M3 20.700 18.300 25.900V30.700L3 25.600z" fill="#2b2c2e"/><path d="M19.100 25 42.900 17.200V24L19.100 32.600z" fill="#b4b6b8"/><path d="M14.800 26.300 17.200 27.100V29.100L14.800 28.300z" fill="#41d64c"/></g>
<rect x="16.5" y="17" width="27" height="12" rx="1.5" fill="#111"/><text x="30" y="27" text-anchor="middle" font-family="Liberation Sans" font-size="10.5" fill="#fff" letter-spacing="-.3">DVD</text></svg>
<div class="t" style="left:706.00px;top:203.14px;font-size:12px;color:#000;letter-spacing:-0.384px;">DVD RW дисковод (F:)</div>
<div class="t" style="left:93.00px;top:409.14px;font-size:12px;color:#3b4a5a;letter-spacing:-0.268px;">Элементов: 4</div>
<div class="abs" style="left:175px;top:408px;width:1px;height:14px;background:#ececec;"></div>
<div class="t" style="left:186.00px;top:409.14px;font-size:12px;color:#3b4a5a;letter-spacing:-0.150px;">Выбран 1 элемент</div>
<div class="abs" style="left:297px;top:408px;width:1px;height:14px;background:#ececec;"></div>
<svg class="abs" style="left:933px;top:408px;" width="16" height="12" viewBox="0 0 16 12"><path d="M.5 .5h3v3h-3zM.5 4.5h3v3h-3zM.5 8.5h3v3h-3z" fill="none" stroke="#8a8a8a" stroke-width=".8"/><path d="M5.5 2h4M11 2h4M5.5 6h4M11 6h4M5.5 10h4M11 10h4" stroke="#6a6a6a" stroke-width="1"/></svg>
<svg class="abs" style="left:956px;top:408px;" width="15" height="12" viewBox="0 0 15 12"><rect x=".5" y=".5" width="14" height="11" fill="#e8f0f8" stroke="#8aa0b8"/><rect x="2" y="2.5" width="11" height="7" fill="#8fb8e0"/><path d="M2 9.5 6 6 9 8 13 5.5V9.5z" fill="#2a5a8a"/></svg>
<div class="win" style="left:1043px;top:15px;width:361px;height:497px;background:#f0f0f0"></div>
<div class="abs" style="left:1043px;top:15px;width:361px;height:30px;background:#fff;"></div>
<svg class="abs" style="left:1052px;top:24px;" width="15" height="13" viewBox="0 0 15 13"><path d="M2 8 4.5 5.5H12L14.5 8z" fill="#d0d4d7"/><path d="M2 8H14.5V10.5L10 12.8 2 10.5z" fill="#4a4e52"/><path d="M10 10.2 14.5 8V10.5L10 12.8z" fill="#a8acb0"/><path d="M.5 .8H3v2.5H.5zM3.6 .8H6.1v2.5H3.6zM.5 3.9H3v2.5H.5zM3.6 3.9H6.1v2.5H3.6z" fill="#1fb0ea"/></svg>
<div class="t" style="left:1072.50px;top:24.14px;font-size:12px;color:#999;letter-spacing:-0.125px;">Свойства: Локальный диск (C:)</div>
<svg class="abs" style="left:1383px;top:24px;" width="12" height="12" viewBox="0 0 12 12"><path d="M.8 .8 11.2 11.2M11.2 .8 .8 11.2" stroke="#777" stroke-width="1"/></svg>
<div class="abs" style="left:1051px;top:54px;width:118px;height:19px;background:#f0f0f0;border:1px solid #d9d9d9;"></div>
<div class="t" style="left:1074.13px;top:58.93px;font-size:11px;color:#000;letter-spacing:0.052px;">Безопасность</div>
<div class="abs" style="left:1168px;top:54px;width:152px;height:19px;background:#f0f0f0;border:1px solid #d9d9d9;"></div>
<div class="t" style="left:1191.29px;top:58.93px;font-size:11px;color:#000;letter-spacing:-0.116px;">Предыдущие версии</div>
<div class="abs" style="left:1319px;top:54px;width:75px;height:19px;background:#f0f0f0;border:1px solid #d9d9d9;"></div>
<div class="t" style="left:1341.58px;top:58.93px;font-size:11px;color:#000;letter-spacing:-0.049px;">Квота</div>
<div class="abs" style="left:1128px;top:72px;width:77px;height:19px;background:#f0f0f0;border:1px solid #d9d9d9;"></div>
<div class="t" style="left:1147.53px;top:76.63px;font-size:11px;color:#000;letter-spacing:-0.145px;">Сервис</div>
<div class="abs" style="left:1204px;top:72px;width:115px;height:19px;background:#f0f0f0;border:1px solid #d9d9d9;"></div>
<div class="t" style="left:1224.42px;top:76.63px;font-size:11px;color:#000;letter-spacing:-0.152px;">Оборудование</div>
<div class="abs" style="left:1318px;top:72px;width:76px;height:19px;background:#f0f0f0;border:1px solid #d9d9d9;"></div>
<div class="t" style="left:1337.39px;top:76.63px;font-size:11px;color:#000;letter-spacing:0.081px;">Доступ</div>
<div class="abs" style="left:1049px;top:90px;width:347px;height:385px;background:#fff;border:1px solid #dcdcdc;"></div>
<div class="abs" style="left:1049px;top:70px;width:80px;height:22px;background:#fff;border:1px solid #d9d9d9;border-bottom:none"></div>
<div class="t" style="left:1070.46px;top:74.63px;font-size:11px;color:#000;letter-spacing:-0.374px;">Общие</div>
<svg class="abs" style="left:1065px;top:112px;" width="25" height="22" viewBox="0 0 25 22"><defs><linearGradient id="pct" x1="0" y1="0" x2="1" y2="1"><stop offset="0" stop-color="#eceeef"/><stop offset="1" stop-color="#b9bdc0"/></linearGradient></defs><path d="M1 12 9.5 8.5 24.5 11.5V13L12 17 1 14z" fill="url(#pct)"/><path d="M1 14 12 17V21.5L1 18z" fill="#3a3d40"/><path d="M12 17 24.5 13V17L12 21.5z" fill="#a9adb0"/><path d="M.5 2 4.6 1.3V5.2H.5zM5.3 1.2 10 .3V5.2H5.3zM.5 5.9H4.6V9.8L.5 9.1zM5.3 5.9H10V10.6L5.3 9.9z" fill="#1fb5ee"/></svg>
<div class="abs" style="left:1137px;top:110px;width:246px;height:23px;background:#fff;border:1px solid #7a7a7a;"></div>
<div class="abs" style="left:1064px;top:144px;width:317px;height:1px;background:#a0a0a0;"></div>
<div class="t" style="left:1064.50px;top:155.63px;font-size:11px;color:#000;letter-spacing:-0.102px;">Тип:</div>
<div class="t" style="left:1172.00px;top:155.63px;font-size:11px;color:#000;letter-spacing:0.113px;">Локальный диск</div>
<div class="t" style="left:1064.50px;top:176.43px;font-size:11px;color:#000;letter-spacing:0.085px;">Файловая система:</div>
<div class="t" style="left:1172.00px;top:176.43px;font-size:11px;color:#000;letter-spacing:-0.359px;">NTFS</div>
<div class="abs" style="left:1064px;top:196px;width:108px;height:1px;background:#a0a0a0;"></div>
<div class="abs" style="left:1064px;top:204px;width:15px;height:15px;background:#26a0da;"></div>
<div class="t" style="left:1085.50px;top:205.93px;font-size:11px;color:#000;letter-spacing:-0.084px;">Занято:</div>
<div class="t" style="left:1184.35px;top:205.93px;font-size:11px;color:#000;letter-spacing:-0.151px;">19 970 891 776 байт</div>
<div class="t" style="left:1311.51px;top:205.93px;font-size:11px;color:#000;letter-spacing:-0.192px;">18,5 ГБ</div>
<div class="abs" style="left:1064px;top:225px;width:15px;height:15px;background:#a6a6a6;"></div>
<div class="t" style="left:1085.00px;top:226.63px;font-size:11px;color:#000;letter-spacing:-0.125px;">Свободно:</div>
<div class="t" style="left:1177.88px;top:226.63px;font-size:11px;color:#000;letter-spacing:-0.125px;">458 507 964 416 байт</div>
<div class="t" style="left:1313.65px;top:226.63px;font-size:11px;color:#000;letter-spacing:-0.049px;">427 ГБ</div>
<div class="abs" style="left:1064px;top:250px;width:317px;height:1px;background:#a0a0a0;"></div>
<div class="t" style="left:1085.50px;top:260.93px;font-size:11px;color:#000;letter-spacing:0.152px;">Емкость:</div>
<div class="t" style="left:1177.88px;top:260.93px;font-size:11px;color:#000;letter-spacing:-0.125px;">478 478 856 192 байт</div>
<div class="t" style="left:1313.65px;top:260.93px;font-size:11px;color:#000;letter-spacing:-0.049px;">445 ГБ</div>
<svg class="abs" style="left:1192.0px;top:279.5px;" width="61" height="61" viewBox="0 0 61 61"><circle cx="30.5" cy="30.5" r="22.75" fill="none" stroke="#a6a6a6" stroke-width="11.5"/><path d="M2.00 30.50A28.5 28.5 0 0 1 2.97 23.14L14.08 26.11A17 17 0 0 0 13.50 30.50z" fill="#26a0da"/></svg>
<div class="t" style="left:1202.65px;top:353.93px;font-size:11px;color:#000;letter-spacing:0.190px;">Диск C:</div>
<div class="abs" style="left:1294px;top:343.5px;width:88px;height:20.5px;background:#e1e1e1;border:1px solid #adadad;"></div>
<div class="t" style="left:1300.52px;top:348.68px;font-size:11px;color:#000;letter-spacing:0.043px;">Очистка диска</div>
<div class="abs" style="left:1064px;top:370.5px;width:317px;height:1px;background:#a0a0a0;"></div>
<div class="abs" style="left:1064px;top:403.5px;width:13px;height:13px;background:#fff;border:1px solid #333;"></div>
<div class="t" style="left:1080.00px;top:404.63px;font-size:11px;color:#000;letter-spacing:0.060px;">Сжать этот диск для экономии места</div>
<div class="abs" style="left:1064px;top:426.5px;width:13px;height:13px;background:#fff;border:1px solid #333;"></div>
<svg class="abs" style="left:1065px;top:427.5px;" width="11" height="11" viewBox="0 0 11 11"><path d="M1.5 5.5 4 8.2 9.6 1.8" fill="none" stroke="#222" stroke-width="1.1"/></svg>
<div class="t" style="left:1080.00px;top:427.13px;font-size:11px;color:#000;letter-spacing:-0.007px;">Разрешить индексировать содержимое файлов на этом</div>
<div class="t" style="left:1080.00px;top:439.63px;font-size:11px;color:#000;letter-spacing:-0.009px;">диске в дополнение к свойствам файла</div>
<div class="abs" style="left:1162px;top:483px;width:73.5px;height:21px;background:#e1e1e1;border:1px solid #adadad;"></div>
<div class="t" style="left:1191.06px;top:488.43px;font-size:11px;color:#000;letter-spacing:0.416px;">ОК</div>
<div class="abs" style="left:1243px;top:483px;width:73px;height:21px;background:#e1e1e1;border:1px solid #adadad;"></div>
<div class="t" style="left:1260.04px;top:488.43px;font-size:11px;color:#000;letter-spacing:-0.111px;">Отмена</div>
<div class="abs" style="left:1324px;top:483px;width:73px;height:21px;background:#cccccc;border:1px solid #bfbfbf;"></div>
<div class="t" style="left:1332.68px;top:488.43px;font-size:11px;color:#838383;letter-spacing:-0.149px;">Применить</div>
<div class="win" style="left:1432px;top:19px;width:361px;height:479px;background:#f0f0f0"></div>
<div class="abs" style="left:1432px;top:19px;width:361px;height:30px;background:#fff;"></div>
<svg class="abs" style="left:1440px;top:26px;" width="16" height="15" viewBox="0 0 16 15"><path d="M.5 1.5 15 .5V14L.5 14.5z" fill="#f4f6f9" stroke="#b8c0cc" stroke-width=".8"/><path d="M4 4h3.6v3.4H4zM8.4 4H12v3.4H8.4zM4 8.2h3.6v3.4H4zM8.4 8.2H12v3.4H8.4z" fill="#2a7be0"/><path d="M.6 1.5v13" stroke="#2a7be0" stroke-width="1.2"/></svg>
<div class="t" style="left:1461.70px;top:28.14px;font-size:12px;color:#999;letter-spacing:-0.270px;">Свойства: DVD-дисковод (E:)</div>
<div class="t" style="left:1621.00px;top:28.14px;font-size:12px;color:#999;letter-spacing:-0.935px;">WIN10_IOT_ENT_LTSC_O...</div>
<svg class="abs" style="left:1772px;top:28px;" width="12" height="12" viewBox="0 0 12 12"><path d="M.8 .8 11.2 11.2M11.2 .8 .8 11.2" stroke="#777" stroke-width="1"/></svg>
<div class="abs" style="left:1488px;top:58px;width:86px;height:19.5px;background:#f0f0f0;border:1px solid #d9d9d9;"></div>
<div class="t" style="left:1493.92px;top:62.93px;font-size:11px;color:#000;letter-spacing:-0.152px;">Оборудование</div>
<div class="abs" style="left:1573px;top:58px;width:50.5px;height:19.5px;background:#f0f0f0;border:1px solid #d9d9d9;"></div>
<div class="t" style="left:1579.64px;top:62.93px;font-size:11px;color:#000;letter-spacing:0.081px;">Доступ</div>
<div class="abs" style="left:1622.5px;top:58px;width:65.0px;height:19.5px;background:#f0f0f0;border:1px solid #d9d9d9;"></div>
<div class="t" style="left:1627.71px;top:62.93px;font-size:11px;color:#000;letter-spacing:-0.073px;">Настройка</div>
<div class="abs" style="left:1438px;top:76px;width:347px;height:385px;background:#fff;border:1px solid #dcdcdc;"></div>
<div class="abs" style="left:1438px;top:56px;width:51px;height:22.5px;background:#fff;border:1px solid #d9d9d9;border-bottom:none"></div>
<div class="t" style="left:1445.96px;top:60.93px;font-size:11px;color:#000;letter-spacing:-0.374px;">Общие</div>
<div class="abs" style="left:1526px;top:96px;width:246px;height:23px;background:#fff;border:1px solid #7a7a7a;"></div>
<div class="t" style="left:1531.50px;top:100.93px;font-size:11px;color:#000;letter-spacing:-0.508px;">WIN10_IOT_ENT_LTSC_OVG</div>
<div class="abs" style="left:1453px;top:130px;width:317px;height:1px;background:#a0a0a0;"></div>
<div class="t" style="left:1453.00px;top:142.33px;font-size:11px;color:#000;letter-spacing:-0.102px;">Тип:</div>
<div class="t" style="left:1560.60px;top:142.33px;font-size:11px;color:#000;letter-spacing:-0.026px;">CD-дисковод</div>
<div class="t" style="left:1453.00px;top:163.13px;font-size:11px;color:#000;letter-spacing:-0.151px;">Файловая система:</div>
<div class="t" style="left:1560.60px;top:163.13px;font-size:11px;color:#000;letter-spacing:-1.036px;">UDF</div>
<div class="abs" style="left:1453px;top:182px;width:108px;height:1px;background:#a0a0a0;"></div>
<div class="abs" style="left:1453px;top:190px;width:15px;height:15px;background:#26a0da;"></div>
<div class="t" style="left:1474.00px;top:192.03px;font-size:11px;color:#000;letter-spacing:0.016px;">Занято:</div>
<div class="t" style="left:1578.16px;top:192.03px;font-size:11px;color:#000;letter-spacing:-0.136px;">5 021 270 016 байт</div>
<div class="t" style="left:1699.82px;top:192.03px;font-size:11px;color:#000;letter-spacing:-0.177px;">4,67 ГБ</div>
<div class="abs" style="left:1453px;top:211px;width:15px;height:15px;background:#a6a6a6;"></div>
<div class="t" style="left:1474.00px;top:212.83px;font-size:11px;color:#000;letter-spacing:-0.081px;">Свободно:</div>
<div class="t" style="left:1640.51px;top:212.83px;font-size:11px;color:#000;letter-spacing:-0.089px;">0 байт</div>
<div class="t" style="left:1703.91px;top:212.83px;font-size:11px;color:#000;letter-spacing:-0.089px;">0 байт</div>
<div class="abs" style="left:1453px;top:236px;width:317px;height:1px;background:#a0a0a0;"></div>
<div class="t" style="left:1474.00px;top:246.63px;font-size:11px;color:#000;letter-spacing:-0.123px;">Емкость:</div>
<div class="t" style="left:1578.16px;top:246.63px;font-size:11px;color:#000;letter-spacing:-0.136px;">5 021 270 016 байт</div>
<div class="t" style="left:1699.82px;top:246.63px;font-size:11px;color:#000;letter-spacing:-0.177px;">4,67 ГБ</div>
<svg class="abs" style="left:1581.8px;top:266.0px;" width="60" height="60" viewBox="0 0 60 60"><circle cx="30.0" cy="30.0" r="22.8" fill="none" stroke="#26a0da" stroke-width="11.0"/></svg>
<div class="t" style="left:1591.87px;top:340.23px;font-size:11px;color:#000;letter-spacing:-0.051px;">Диск E:</div>
<div class="abs" style="left:1453px;top:356px;width:317px;height:1px;background:#a0a0a0;"></div>
<div class="abs" style="left:1551.5px;top:469.5px;width:72.5px;height:20.5px;background:#e1e1e1;border:1px solid #adadad;"></div>
<div class="t" style="left:1580.06px;top:474.68px;font-size:11px;color:#000;letter-spacing:0.416px;">ОК</div>
<div class="abs" style="left:1632px;top:469.5px;width:73px;height:20.5px;background:#e1e1e1;border:1px solid #adadad;"></div>
<div class="t" style="left:1649.38px;top:474.68px;font-size:11px;color:#000;letter-spacing:-0.245px;">Отмена</div>
<div class="abs" style="left:1713.5px;top:469.5px;width:72.5px;height:20.5px;background:#cccccc;border:1px solid #bfbfbf;"></div>
<div class="t" style="left:1722.28px;top:474.68px;font-size:11px;color:#838383;letter-spacing:-0.238px;">Применить</div>
<div class="win" style="left:79px;top:466px;width:777px;height:557px"></div>
<svg class="abs" style="left:87px;top:473px;" width="16" height="15" viewBox="0 0 16 15"><rect x="0" y="3" width="3" height="8" fill="#9aa4ac"/><rect x="3.5" y=".5" width="12" height="9.5" fill="#e8f4fb" stroke="#7a8a96"/><path d="M4.5 6.5 6.5 3.5 8.5 7 10.5 3 12.5 6 14.5 4.5" fill="none" stroke="#2b8ad6" stroke-width="1"/><rect x="7.5" y="10.5" width="4" height="1.6" fill="#8a969e"/><rect x="5" y="12.2" width="9" height="1.6" fill="#b4bcc2"/></svg>
<div class="t" style="left:108.00px;top:475.44px;font-size:12px;color:#000;letter-spacing:-0.125px;">Диспетчер задач</div>
<div class="abs" style="left:737px;top:481px;width:10px;height:1px;background:#000;"></div>
<div class="abs" style="left:781.5px;top:475px;width:10px;height:10px;border:1px solid #000;"></div>
<svg class="abs" style="left:828px;top:475px;" width="11" height="11" viewBox="0 0 11 11"><path d="M.5 .5 10.5 10.5M10.5 .5 .5 10.5" stroke="#000" stroke-width="1.1"/></svg>
<div class="t" style="left:86.30px;top:500.14px;font-size:12px;color:#000;letter-spacing:-0.304px;">Файл</div>
<div class="t" style="left:129.30px;top:500.14px;font-size:12px;color:#000;letter-spacing:-0.074px;">Параметры</div>
<div class="t" style="left:207.00px;top:500.14px;font-size:12px;color:#000;letter-spacing:-0.573px;">Вид</div>
<div class="abs" style="left:79px;top:514px;width:777px;height:2px;background:#f3f3f3;"></div>
<div class="abs" style="left:79px;top:540px;width:777px;height:1px;background:#d9d9d9;"></div>
<div class="abs" style="left:81px;top:520px;width:68px;height:21px;background:#f0f0f0;border:1px solid #d9d9d9;"></div>
<div class="t" style="left:86.15px;top:525.14px;font-size:12px;color:#000;letter-spacing:0.098px;">Процессы</div>
<div class="abs" style="left:279px;top:520px;width:129px;height:21px;background:#f0f0f0;border:1px solid #d9d9d9;"></div>
<div class="t" style="left:283.94px;top:525.14px;font-size:12px;color:#000;letter-spacing:0.170px;">Журнал приложений</div>
<div class="abs" style="left:407px;top:520px;width:85px;height:21px;background:#f0f0f0;border:1px solid #d9d9d9;"></div>
<div class="t" style="left:413.29px;top:525.14px;font-size:12px;color:#000;letter-spacing:-0.125px;">Автозагрузка</div>
<div class="abs" style="left:491px;top:520px;width:91px;height:21px;background:#f0f0f0;border:1px solid #d9d9d9;"></div>
<div class="t" style="left:497.22px;top:525.14px;font-size:12px;color:#000;letter-spacing:-0.069px;">Пользователи</div>
<div class="abs" style="left:581px;top:520px;width:88px;height:21px;background:#f0f0f0;border:1px solid #d9d9d9;"></div>
<div class="t" style="left:587.06px;top:525.14px;font-size:12px;color:#000;letter-spacing:0.112px;">Подробности</div>
<div class="abs" style="left:668px;top:520px;width:57px;height:21px;background:#f0f0f0;border:1px solid #d9d9d9;"></div>
<div class="t" style="left:673.25px;top:525.14px;font-size:12px;color:#000;letter-spacing:0.005px;">Службы</div>
<div class="abs" style="left:148px;top:518px;width:132px;height:23px;background:#fff;border:1px solid #d9d9d9;border-bottom:none"></div>
<div class="t" style="left:156.18px;top:523.44px;font-size:12px;color:#000;letter-spacing:-0.038px;">Производительность</div>
<div class="abs" style="left:83px;top:613px;width:204px;height:60px;background:#d9d9d9;"></div>
<div class="abs" style="left:93px;top:563px;width:60px;height:40px;background:#fff;border:1px solid #117dbb;"></div>
<svg class="abs" style="left:93px;top:563px;" width="60" height="40" viewBox="0 0 60 40"><path d="M36.5 39 38 33.500 39.5 39zM46 39 46.5 37.500 47 39z" fill="#c8e4f4" stroke="#117dbb" stroke-width=".8"/></svg>
<div class="t" style="left:163.80px;top:562.47px;font-size:15px;color:#000;letter-spacing:-0.045px;">ЦП</div>
<div class="t" style="left:164.30px;top:581.44px;font-size:12px;color:#000;letter-spacing:-0.314px;">0% 0,82 ГГц</div>
<div class="abs" style="left:93px;top:623px;width:60px;height:40px;background:#fff;border:1px solid #8b12ae;"></div>
<svg class="abs" style="left:93px;top:623px;" width="60" height="40" viewBox="0 0 60 40"><path d="M37 37.8H60V39.500H36z" fill="#8b12ae"/></svg>
<div class="t" style="left:163.80px;top:622.67px;font-size:15px;color:#000;letter-spacing:-0.075px;">Память</div>
<div class="t" style="left:164.30px;top:640.94px;font-size:12px;color:#000;letter-spacing:-0.403px;">1,5/31,7 ГБ (5%)</div>
<div class="abs" style="left:93px;top:683px;width:60px;height:45.5px;background:#fff;border:1px solid #4da60c;"></div>
<svg class="abs" style="left:93px;top:683px;" width="60" height="45.5" viewBox="0 0 60 45.5"><path d="M44.5 44.5 46.5 41 48.5 44.5z" fill="#d4ecc4" stroke="#4da60c" stroke-width=".8"/></svg>
<div class="t" style="left:163.80px;top:682.67px;font-size:15px;color:#000;letter-spacing:-0.044px;">Диск 0 (C:)</div>
<div class="t" style="left:164.30px;top:700.94px;font-size:12px;color:#000;letter-spacing:-1.200px;">SSD</div>
<div class="t" style="left:164.30px;top:715.94px;font-size:12px;color:#000;letter-spacing:-0.772px;">0%</div>
<div class="abs" style="left:93px;top:749.3px;width:60px;height:45.5px;background:#fff;border:1px solid #4da60c;"></div>
<div class="t" style="left:163.80px;top:748.47px;font-size:15px;color:#000;letter-spacing:0.065px;">Диск 1 (D:)</div>
<div class="t" style="left:164.30px;top:767.14px;font-size:12px;color:#000;letter-spacing:-0.500px;">HDD</div>
<div class="t" style="left:164.30px;top:781.64px;font-size:12px;color:#000;letter-spacing:-0.772px;">0%</div>
<div class="abs" style="left:93px;top:815px;width:60px;height:45.5px;background:#fff;border:1px solid #a74f01;"></div>
<div class="t" style="left:163.80px;top:814.47px;font-size:15px;color:#000;letter-spacing:0.035px;">Ethernet</div>
<div class="t" style="left:164.30px;top:833.14px;font-size:12px;color:#000;letter-spacing:-0.259px;">Ethernet</div>
<div class="t" style="left:164.30px;top:848.44px;font-size:12px;color:#707070;letter-spacing:-0.086px;">О:</div>
<div class="t" style="left:180.00px;top:848.44px;font-size:12px;color:#000;letter-spacing:-0.188px;">0</div>
<div class="t" style="left:190.50px;top:848.44px;font-size:12px;color:#707070;letter-spacing:-0.234px;">П:</div>
<div class="t" style="left:206.00px;top:848.44px;font-size:12px;color:#000;letter-spacing:0.070px;">0 кбит/с</div>
<div class="abs" style="left:93px;top:881.3px;width:60px;height:45.5px;background:#fff;border:1px solid #117dbb;"></div>
<svg class="abs" style="left:93px;top:881.3px;" width="60" height="45.5" viewBox="0 0 60 45.5"><path d="M37 44.5 38.5 39.5 39.5 43 41 42 42 43.5 43.5 42.5 45 43.8 47 43 50 44.5z" fill="#c8e4f4" stroke="#117dbb" stroke-width=".7"/></svg>
<div class="t" style="left:163.80px;top:879.97px;font-size:15px;color:#000;letter-spacing:0.336px;width:126.2px;overflow:hidden;">Графический процессор 0</div>
<div class="t" style="left:164.30px;top:899.14px;font-size:12px;color:#000;letter-spacing:-0.657px;width:125.7px;overflow:hidden;">NVIDIA GeForce GTX 1660</div>
<div class="t" style="left:164.30px;top:914.14px;font-size:12px;color:#000;letter-spacing:-0.253px;">1% (36 °C)</div>
<div class="abs" style="left:290px;top:563px;width:1px;height:408px;background:#e0e0e0;"></div>
<div class="t" style="left:316.30px;top:564.81px;font-size:27px;color:#000;letter-spacing:-0.458px;">Память</div>
<div class="t" style="left:780.49px;top:574.18px;font-size:16px;color:#000;letter-spacing:-0.507px;">32,0 ГБ</div>
<div class="t" style="left:317.50px;top:600.44px;font-size:12px;color:#707070;letter-spacing:-0.245px;">Использование памяти</div>
<div class="t" style="left:796.33px;top:600.74px;font-size:12px;color:#707070;letter-spacing:-0.866px;">31,7 ГБ</div>
<svg class="abs" style="left:317px;top:615px;" width="515" height="80" viewBox="0 0 515 80"><path d="M17.5 0V80" stroke="#ecdff2" stroke-width="1"/><path d="M52.5 0V80" stroke="#ecdff2" stroke-width="1"/><path d="M87.5 0V80" stroke="#ecdff2" stroke-width="1"/><path d="M122.5 0V80" stroke="#ecdff2" stroke-width="1"/><path d="M157.5 0V80" stroke="#ecdff2" stroke-width="1"/><path d="M192.5 0V80" stroke="#ecdff2" stroke-width="1"/><path d="M227.5 0V80" stroke="#ecdff2" stroke-width="1"/><path d="M262.5 0V80" stroke="#ecdff2" stroke-width="1"/><path d="M297.5 0V80" stroke="#ecdff2" stroke-width="1"/><path d="M332.5 0V80" stroke="#ecdff2" stroke-width="1"/><path d="M367.5 0V80" stroke="#ecdff2" stroke-width="1"/><path d="M402.5 0V80" stroke="#ecdff2" stroke-width="1"/><path d="M437.5 0V80" stroke="#ecdff2" stroke-width="1"/><path d="M472.5 0V80" stroke="#ecdff2" stroke-width="1"/><path d="M507.5 0V80" stroke="#ecdff2" stroke-width="1"/><path d="M0 8.5H515" stroke="#ecdff2" stroke-width="1"/><path d="M0 16.5H515" stroke="#ecdff2" stroke-width="1"/><path d="M0 24.5H515" stroke="#ecdff2" stroke-width="1"/><path d="M0 32.5H515" stroke="#ecdff2" stroke-width="1"/><path d="M0 40.5H515" stroke="#ecdff2" stroke-width="1"/><path d="M0 48.5H515" stroke="#ecdff2" stroke-width="1"/><path d="M0 56.5H515" stroke="#ecdff2" stroke-width="1"/><path d="M0 64.5H515" stroke="#ecdff2" stroke-width="1"/><path d="M0 72.5H515" stroke="#ecdff2" stroke-width="1"/><path d="M322 79 332 76.5H515V79z" fill="#f4e9f7"/><path d="M322 79 332 76.5H515" fill="none" stroke="#8b12ae" stroke-width="1"/></svg>
<div class="abs" style="left:317px;top:615px;width:515px;height:80px;border:1px solid #8b12ae;"></div>
<div class="t" style="left:317.50px;top:698.44px;font-size:12px;color:#707070;letter-spacing:-0.542px;">60 секунд</div>
<div class="t" style="left:825.51px;top:697.94px;font-size:12px;color:#707070;letter-spacing:-0.188px;">0</div>
<div class="t" style="left:317.50px;top:717.14px;font-size:12px;color:#707070;letter-spacing:-0.412px;">Структура памяти</div>
<div class="abs" style="left:317px;top:734px;width:515px;height:52px;background:#fff;border:1px solid #8b12ae;"></div>
<div class="abs" style="left:318px;top:735px;width:24px;height:50px;background:#f4ecf7;"></div>
<div class="abs" style="left:342px;top:735px;width:1px;height:50px;background:#c99ad6;"></div>
<div class="abs" style="left:351px;top:735px;width:1px;height:50px;background:#dcc0e4;"></div>
<div class="t" style="left:317.50px;top:812.14px;font-size:12px;color:#707070;letter-spacing:-0.109px;">Используется (сжатая)</div>
<div class="t" style="left:465.00px;top:812.14px;font-size:12px;color:#707070;letter-spacing:0.016px;">Доступно</div>
<div class="t" style="left:318.30px;top:831.22px;font-size:19px;color:#000;letter-spacing:-0.425px;">1,4 ГБ (0,3 МБ)</div>
<div class="t" style="left:465.80px;top:831.22px;font-size:19px;color:#000;letter-spacing:-0.645px;">30,2 ГБ</div>
<div class="t" style="left:317.50px;top:863.44px;font-size:12px;color:#707070;letter-spacing:-0.324px;">Выделено</div>
<div class="t" style="left:433.30px;top:863.44px;font-size:12px;color:#707070;letter-spacing:0.148px;">Кэшировано</div>
<div class="t" style="left:318.30px;top:881.92px;font-size:19px;color:#000;letter-spacing:-0.265px;">1,8/36,7 ГБ</div>
<div class="t" style="left:433.80px;top:881.92px;font-size:19px;color:#000;letter-spacing:0.086px;">616 МБ</div>
<div class="t" style="left:317.50px;top:914.14px;font-size:12px;color:#707070;letter-spacing:0.053px;">Выгружаемый пул</div>
<div class="t" style="left:440.50px;top:914.14px;font-size:12px;color:#707070;letter-spacing:0.093px;">Невыгружаемый пул</div>
<div class="t" style="left:317.50px;top:932.72px;font-size:19px;color:#000;letter-spacing:-0.080px;">84,4 МБ</div>
<div class="t" style="left:441.30px;top:932.72px;font-size:19px;color:#000;letter-spacing:-0.047px;">142 МБ</div>
<div class="t" style="left:569.20px;top:811.64px;font-size:12px;color:#707070;letter-spacing:-0.106px;">Скорость:</div>
<div class="t" style="left:744.20px;top:811.64px;font-size:12px;color:#000;letter-spacing:-0.363px;">4800 МГц</div>
<div class="t" style="left:569.20px;top:829.64px;font-size:12px;color:#707070;letter-spacing:-0.051px;">Использовано гнезд:</div>
<div class="t" style="left:744.20px;top:829.64px;font-size:12px;color:#000;letter-spacing:-0.422px;">2 из 2</div>
<div class="t" style="left:569.20px;top:847.74px;font-size:12px;color:#707070;letter-spacing:0.083px;">Форм-фактор:</div>
<div class="t" style="left:744.20px;top:847.74px;font-size:12px;color:#000;letter-spacing:0.125px;">DIMM</div>
<div class="t" style="left:569.20px;top:865.84px;font-size:12px;color:#707070;letter-spacing:-0.106px;">Зарезервировано аппаратно:</div>
<div class="t" style="left:744.20px;top:865.84px;font-size:12px;color:#000;letter-spacing:-0.489px;">290 МБ</div>
<svg class="abs" style="left:87px;top:989px;" width="19" height="19" viewBox="0 0 19 19"><circle cx="9.5" cy="9.5" r="8.8" fill="#fff" stroke="#9a9a9a" stroke-width="1"/><path d="M5.3 11.5 9.5 7.3 13.7 11.5" fill="none" stroke="#8a8a8a" stroke-width="1.2"/></svg>
<div class="t" style="left:113.60px;top:993.04px;font-size:12px;color:#000;letter-spacing:0.069px;">Меньше</div>
<div class="abs" style="left:168px;top:990px;width:1px;height:17px;background:#d8d8d8;"></div>
<svg class="abs" style="left:176.7px;top:990.5px;" width="16" height="16" viewBox="0 0 16 16"><circle cx="8" cy="8" r="7.3" fill="#f4f0ea" stroke="#9a9288" stroke-width="1.2"/><circle cx="8" cy="8" r="5.6" fill="#fbf9f6" stroke="#d8d0c4" stroke-width=".6"/><path d="M4.4 3.6 6.2 3 11 11.6 9.8 12.2z" fill="#c8202a"/><path d="M8 2.5v1.2M8 12.3v1.2M2.5 8h1.2M12.3 8h1.2" stroke="#a09888" stroke-width=".7"/></svg>
<div class="t" style="left:198.30px;top:993.04px;font-size:12px;color:#1a5fb4;letter-spacing:0.028px;">Открыть монитор ресурсов</div>
<div class="win" style="left:934px;top:552px;width:856px;height:470px;background:#f0f0f0;overflow:hidden"></div>
<div class="abs" style="left:934px;top:552px;width:856px;height:48px;background:#fff;"></div>
<svg class="abs" style="left:942px;top:559px;" width="16" height="16" viewBox="0 0 16 16"><circle cx="8" cy="8" r="7.3" fill="#f4f0ea" stroke="#9a9288" stroke-width="1.2"/><circle cx="8" cy="8" r="5.6" fill="#fbf9f6" stroke="#d8d0c4" stroke-width=".6"/><path d="M4.4 3.6 6.2 3 11 11.6 9.8 12.2z" fill="#c8202a"/><path d="M8 2.5v1.2M8 12.3v1.2M2.5 8h1.2M12.3 8h1.2" stroke="#a09888" stroke-width=".7"/></svg>
<div class="t" style="left:963.30px;top:561.14px;font-size:12px;color:#999;letter-spacing:0.066px;">Монитор ресурсов</div>
<div class="abs" style="left:1671px;top:566px;width:10px;height:1px;background:#9a9a9a;"></div>
<div class="abs" style="left:1716px;top:561px;width:10px;height:10px;border:1px solid #8a8a8a;"></div>
<svg class="abs" style="left:1761.5px;top:561px;" width="11" height="11" viewBox="0 0 11 11"><path d="M.5 .5 10.5 10.5M10.5 .5 .5 10.5" stroke="#8a8a8a" stroke-width="1"/></svg>
<div class="t" style="left:941.30px;top:585.94px;font-size:12px;color:#7a7a7a;letter-spacing:-0.304px;">Файл</div>
<div class="t" style="left:984.30px;top:585.94px;font-size:12px;color:#7a7a7a;letter-spacing:0.208px;">Монитор</div>
<div class="t" style="left:1049.30px;top:585.94px;font-size:12px;color:#7a7a7a;letter-spacing:-0.254px;">Справка</div>
<div class="abs" style="left:937px;top:606px;width:48.25px;height:20.5px;background:#f0f0f0;border:1px solid #d9d9d9;"></div>
<div class="t" style="left:943.21px;top:611.14px;font-size:12px;color:#000;letter-spacing:-0.074px;">Обзор</div>
<div class="abs" style="left:984.25px;top:606px;width:48.5px;height:20.5px;background:#f0f0f0;border:1px solid #d9d9d9;"></div>
<div class="t" style="left:991.25px;top:611.14px;font-size:12px;color:#000;letter-spacing:-0.008px;">ЦП</div>
<div class="abs" style="left:1087.5px;top:606px;width:46.75px;height:20.5px;background:#f0f0f0;border:1px solid #d9d9d9;"></div>
<div class="t" style="left:1092.09px;top:611.14px;font-size:12px;color:#000;letter-spacing:0.177px;">Диск</div>
<div class="abs" style="left:1133.25px;top:606px;width:47.25px;height:20.5px;background:#f0f0f0;border:1px solid #d9d9d9;"></div>
<div class="t" style="left:1139.77px;top:611.14px;font-size:12px;color:#000;letter-spacing:-0.551px;">Сеть</div>
<div class="abs" style="left:936px;top:626px;width:1852px;height:5px;background:#fff;width:852px;"></div>
<div class="abs" style="left:1031.75px;top:604px;width:56.5px;height:23.5px;background:#fff;border:1px solid #d9d9d9;border-bottom:none"></div>
<div class="t" style="left:1039.13px;top:609.14px;font-size:12px;color:#000;letter-spacing:-0.249px;">Память</div>
<div class="abs" style="left:935.5px;top:634px;width:612.5px;height:29.5px;background:linear-gradient(180deg,#fbfbfb 0,#ececec 30%,#d2d2d2 70%,#b4b4b4 100%);border:1px solid #6e6e6e;border-bottom-color:#9a9a9a;"></div>
<div class="t" style="left:942.00px;top:642.66px;font-size:14px;color:#000;letter-spacing:-0.757px;">Процессы</div>
<svg class="abs" style="left:1108.3px;top:643px;" width="11" height="11" viewBox="0 0 11 11"><rect width="11" height="11" fill="#0a5c0a"/><path d="M1.5 0V11M3.5 0V11M5.5 0V11M7.5 0V11M9.5 0V11" stroke="#1e8a1e" stroke-width=".7" stroke-dasharray="1 1"/></svg>
<div class="t" style="left:1125.80px;top:643.44px;font-size:12px;color:#000;letter-spacing:-0.249px;">Использование физической памяти: 4%</div>
<svg class="abs" style="left:1518.0px;top:638.8px;" width="19" height="19" viewBox="0 0 19 19"><defs><linearGradient id="cb" x1="0" y1="0" x2="0" y2="1"><stop offset="0" stop-color="#fff"/><stop offset="1" stop-color="#dcdcdc"/></linearGradient></defs><circle cx="9.5" cy="9.5" r="8.7" fill="url(#cb)" stroke="#8a8a8a" stroke-width="1"/><path d="M5.6 11.2 9.5 7.3 13.4 11.2" fill="none" stroke="#222" stroke-width="1.8"/></svg>
<div class="abs" style="left:935.5px;top:663.5px;width:612.5px;height:163px;background:#fff;border:1px solid #8a8a8a;border-top:none"></div>
<div class="abs" style="left:1115.5px;top:664px;width:1px;height:162px;background:#ececec;"></div>
<div class="abs" style="left:1165.5px;top:664px;width:1px;height:162px;background:#ececec;"></div>
<div class="abs" style="left:1241.3px;top:664px;width:1px;height:162px;background:#ececec;"></div>
<div class="abs" style="left:1313.3px;top:664px;width:1px;height:162px;background:#ececec;"></div>
<div class="abs" style="left:1385.3px;top:664px;width:1px;height:162px;background:#ececec;"></div>
<div class="abs" style="left:1457px;top:664px;width:1px;height:162px;background:#ececec;"></div>
<div class="abs" style="left:1529.3px;top:664px;width:1px;height:162px;background:#ececec;"></div>
<div class="abs" style="left:940px;top:669px;width:13px;height:13px;background:#fff;border:1px solid #333;"></div>
<div class="t" style="left:959.50px;top:670.44px;font-size:12px;color:#000;letter-spacing:-0.284px;">Образ</div>
<div class="t" style="left:1122.50px;top:670.44px;font-size:12px;color:#000;letter-spacing:-0.399px;">ИД п...</div>
<div class="t" style="left:1174.30px;top:670.44px;font-size:12px;color:#000;letter-spacing:-0.209px;">Ошибок с...</div>
<div class="t" style="left:1253.30px;top:670.44px;font-size:12px;color:#000;letter-spacing:-0.551px;">Заверше...</div>
<div class="t" style="left:1321.30px;top:670.44px;font-size:12px;color:#000;letter-spacing:-0.206px;">Рабочий ...</div>
<div class="t" style="left:1392.50px;top:670.44px;font-size:12px;color:#000;letter-spacing:-0.639px;">Общий (КБ)</div>
<div class="t" style="left:1464.30px;top:670.44px;font-size:12px;color:#000;letter-spacing:-0.539px;">Частный (...</div>
<svg class="abs" style="left:1490.5px;top:665px;" width="8" height="4" viewBox="0 0 8 4"><path d="M.5 .5 4 3.5 7.5 .5" fill="none" stroke="#9a9a9a" stroke-width=".8"/></svg>
<div class="abs" style="left:940px;top:691.0px;width:13px;height:13px;background:#fff;border:1px solid #333;"></div>
<div class="t" style="left:958.30px;top:691.14px;font-size:12px;color:#000;letter-spacing:-0.340px;">explorer.exe</div>
<div class="t" style="left:1122.00px;top:691.14px;font-size:12px;color:#000;letter-spacing:-0.601px;">4600</div>
<div class="t" style="left:1227.61px;top:691.14px;font-size:12px;color:#000;letter-spacing:-0.737px;">0</div>
<div class="t" style="left:1266.90px;top:691.14px;font-size:12px;color:#000;letter-spacing:-0.600px;">119 932</div>
<div class="t" style="left:1338.97px;top:691.14px;font-size:12px;color:#000;letter-spacing:-0.727px;">149 196</div>
<div class="t" style="left:1410.47px;top:691.14px;font-size:12px;color:#000;letter-spacing:-0.727px;">100 064</div>
<div class="t" style="left:1488.72px;top:691.14px;font-size:12px;color:#000;letter-spacing:-0.726px;">49 132</div>
<div class="abs" style="left:940px;top:708.05px;width:13px;height:13px;background:#fff;border:1px solid #333;"></div>
<div class="t" style="left:958.30px;top:708.19px;font-size:12px;color:#000;letter-spacing:-0.533px;">dwm.exe</div>
<div class="t" style="left:1122.00px;top:708.19px;font-size:12px;color:#000;letter-spacing:-0.601px;">1232</div>
<div class="t" style="left:1227.61px;top:708.19px;font-size:12px;color:#000;letter-spacing:-0.737px;">1</div>
<div class="t" style="left:1272.72px;top:708.19px;font-size:12px;color:#000;letter-spacing:-0.726px;">69 136</div>
<div class="t" style="left:1344.92px;top:708.19px;font-size:12px;color:#000;letter-spacing:-0.726px;">65 984</div>
<div class="t" style="left:1416.42px;top:708.19px;font-size:12px;color:#000;letter-spacing:-0.726px;">43 780</div>
<div class="t" style="left:1488.72px;top:708.19px;font-size:12px;color:#000;letter-spacing:-0.726px;">22 204</div>
<div class="abs" style="left:940px;top:725.1px;width:13px;height:13px;background:#fff;border:1px solid #333;"></div>
<div class="t" style="left:958.30px;top:725.24px;font-size:12px;color:#000;letter-spacing:-0.337px;">perfmon.exe</div>
<div class="t" style="left:1122.00px;top:725.24px;font-size:12px;color:#000;letter-spacing:-0.601px;">3096</div>
<div class="t" style="left:1227.61px;top:725.24px;font-size:12px;color:#000;letter-spacing:-0.737px;">0</div>
<div class="t" style="left:1272.72px;top:725.24px;font-size:12px;color:#000;letter-spacing:-0.726px;">19 088</div>
<div class="t" style="left:1344.92px;top:725.24px;font-size:12px;color:#000;letter-spacing:-0.726px;">35 024</div>
<div class="t" style="left:1416.42px;top:725.24px;font-size:12px;color:#000;letter-spacing:-0.726px;">17 548</div>
<div class="t" style="left:1488.72px;top:725.24px;font-size:12px;color:#000;letter-spacing:-0.726px;">17 476</div>
<div class="abs" style="left:940px;top:742.15px;width:13px;height:13px;background:#fff;border:1px solid #333;"></div>
<div class="t" style="left:958.30px;top:742.29px;font-size:12px;color:#000;letter-spacing:-0.551px;">Taskmgr.exe</div>
<div class="t" style="left:1122.00px;top:742.29px;font-size:12px;color:#000;letter-spacing:-0.601px;">6016</div>
<div class="t" style="left:1227.61px;top:742.29px;font-size:12px;color:#000;letter-spacing:-0.737px;">0</div>
<div class="t" style="left:1272.72px;top:742.29px;font-size:12px;color:#000;letter-spacing:-0.726px;">17 404</div>
<div class="t" style="left:1344.92px;top:742.29px;font-size:12px;color:#000;letter-spacing:-0.726px;">41 388</div>
<div class="t" style="left:1416.42px;top:742.29px;font-size:12px;color:#000;letter-spacing:-0.726px;">27 564</div>
<div class="t" style="left:1488.72px;top:742.29px;font-size:12px;color:#000;letter-spacing:-0.726px;">13 824</div>
<div class="abs" style="left:940px;top:759.2px;width:13px;height:13px;background:#fff;border:1px solid #333;"></div>
<div class="t" style="left:958.30px;top:759.34px;font-size:12px;color:#000;letter-spacing:-0.525px;">svchost.exe (LocalServiceNet...</div>
<div class="t" style="left:1122.00px;top:759.34px;font-size:12px;color:#000;letter-spacing:-0.601px;">1472</div>
<div class="t" style="left:1227.61px;top:759.34px;font-size:12px;color:#000;letter-spacing:-0.737px;">0</div>
<div class="t" style="left:1272.72px;top:759.34px;font-size:12px;color:#000;letter-spacing:-0.726px;">15 664</div>
<div class="t" style="left:1344.92px;top:759.34px;font-size:12px;color:#000;letter-spacing:-0.726px;">19 064</div>
<div class="t" style="left:1422.37px;top:759.34px;font-size:12px;color:#000;letter-spacing:-0.726px;">6 764</div>
<div class="t" style="left:1488.72px;top:759.34px;font-size:12px;color:#000;letter-spacing:-0.726px;">12 300</div>
<div class="abs" style="left:940px;top:776.25px;width:13px;height:13px;background:#fff;border:1px solid #333;"></div>
<div class="t" style="left:958.30px;top:776.39px;font-size:12px;color:#000;letter-spacing:-0.597px;">SearchApp.exe</div>
<div class="t" style="left:1122.00px;top:776.39px;font-size:12px;color:#000;letter-spacing:-0.601px;">5440</div>
<div class="t" style="left:1227.61px;top:776.39px;font-size:12px;color:#000;letter-spacing:-0.737px;">0</div>
<div class="t" style="left:1272.72px;top:776.39px;font-size:12px;color:#000;letter-spacing:-0.726px;">51 152</div>
<div class="t" style="left:1344.92px;top:776.39px;font-size:12px;color:#000;letter-spacing:-0.726px;">40 760</div>
<div class="t" style="left:1416.42px;top:776.39px;font-size:12px;color:#000;letter-spacing:-0.726px;">28 980</div>
<div class="t" style="left:1488.87px;top:776.39px;font-size:12px;color:#000;letter-spacing:-0.577px;">11 780</div>
<div class="abs" style="left:940px;top:793.3px;width:13px;height:13px;background:#fff;border:1px solid #333;"></div>
<div class="t" style="left:958.30px;top:793.44px;font-size:12px;color:#000;letter-spacing:-0.298px;">TextInputHost.exe</div>
<div class="t" style="left:1122.00px;top:793.44px;font-size:12px;color:#000;letter-spacing:-0.601px;">5508</div>
<div class="t" style="left:1227.61px;top:793.44px;font-size:12px;color:#000;letter-spacing:-0.737px;">0</div>
<div class="t" style="left:1272.72px;top:793.44px;font-size:12px;color:#000;letter-spacing:-0.726px;">45 616</div>
<div class="t" style="left:1344.92px;top:793.44px;font-size:12px;color:#000;letter-spacing:-0.726px;">54 528</div>
<div class="t" style="left:1416.42px;top:793.44px;font-size:12px;color:#000;letter-spacing:-0.726px;">43 052</div>
<div class="t" style="left:1488.87px;top:793.44px;font-size:12px;color:#000;letter-spacing:-0.577px;">11 476</div>
<div class="abs" style="left:940px;top:810.35px;width:13px;height:13px;background:#fff;border:1px solid #333;"></div>
<div class="t" style="left:958.30px;top:810.49px;font-size:12px;color:#000;letter-spacing:-0.542px;">svchost.exe (LocalServiceNo...</div>
<div class="t" style="left:1122.00px;top:810.49px;font-size:12px;color:#000;letter-spacing:-0.601px;">2840</div>
<div class="t" style="left:1227.61px;top:810.49px;font-size:12px;color:#000;letter-spacing:-0.737px;">0</div>
<div class="t" style="left:1278.67px;top:810.49px;font-size:12px;color:#000;letter-spacing:-0.726px;">8 964</div>
<div class="t" style="left:1344.92px;top:810.49px;font-size:12px;color:#000;letter-spacing:-0.726px;">17 992</div>
<div class="t" style="left:1416.42px;top:810.49px;font-size:12px;color:#000;letter-spacing:-0.726px;">10 296</div>
<div class="t" style="left:1494.67px;top:810.49px;font-size:12px;color:#000;letter-spacing:-0.726px;">7 696</div>
<div class="abs" style="left:1530.3px;top:664px;width:17px;height:162px;background:#f0f0f0;"></div>
<svg class="abs" style="left:1534.5px;top:671px;" width="9" height="6" viewBox="0 0 9 6"><path d="M.8 5 4.5 1.3 8.2 5" fill="none" stroke="#444" stroke-width="1.6"/></svg>
<div class="abs" style="left:1531.3px;top:681.3px;width:15px;height:16.3px;background:#cdcdcd;"></div>
<svg class="abs" style="left:1534.5px;top:813.5px;" width="9" height="6" viewBox="0 0 9 6"><path d="M.8 1 4.5 4.7 8.2 1" fill="none" stroke="#444" stroke-width="1.6"/></svg>
<div class="abs" style="left:935.5px;top:833.5px;width:612.5px;height:29.5px;background:linear-gradient(180deg,#fbfbfb 0,#ececec 30%,#d2d2d2 70%,#b4b4b4 100%);border:1px solid #6e6e6e;border-bottom-color:#9a9a9a;"></div>
<div class="t" style="left:942.50px;top:841.96px;font-size:14px;color:#000;letter-spacing:-0.574px;">Физическая память</div>
<svg class="abs" style="left:1108.3px;top:842.3px;" width="11" height="11" viewBox="0 0 11 11"><rect width="11" height="11" fill="#0a5c0a"/><path d="M1.5 0V11M3.5 0V11M5.5 0V11M7.5 0V11M9.5 0V11" stroke="#1e8a1e" stroke-width=".7" stroke-dasharray="1 1"/></svg>
<div class="t" style="left:1125.80px;top:842.44px;font-size:12px;color:#000;letter-spacing:-0.544px;">Используется: 1478 МБ</div>
<div class="abs" style="left:1316.3px;top:842.3px;width:11.3px;height:11.5px;background:#9ccbff;border:1px solid #d8ecff;"></div>
<div class="t" style="left:1333.30px;top:842.44px;font-size:12px;color:#000;letter-spacing:-0.434px;">Доступно: 30966 МБ</div>
<svg class="abs" style="left:1517.8px;top:838.3px;" width="19" height="19" viewBox="0 0 19 19"><defs><linearGradient id="cb" x1="0" y1="0" x2="0" y2="1"><stop offset="0" stop-color="#fff"/><stop offset="1" stop-color="#dcdcdc"/></linearGradient></defs><circle cx="9.5" cy="9.5" r="8.7" fill="url(#cb)" stroke="#8a8a8a" stroke-width="1"/><path d="M5.6 11.2 9.5 7.3 13.4 11.2" fill="none" stroke="#222" stroke-width="1.8"/></svg>
<div class="abs" style="left:935.5px;top:863px;width:612.5px;height:156px;background:#fff;border:1px solid #8a8a8a;border-top:none"></div>
<div class="abs" style="left:944.3px;top:879.5px;width:594.5px;height:23.5px;background:linear-gradient(180deg,#c6d9f5 0,#b0caef 45%,#a4c0ea 100%);border:1px solid #8c8c8c;"></div>
<div class="abs" style="left:945.3px;top:880.5px;width:4.2px;height:21.5px;background:linear-gradient(180deg,#d8d8d8,#b0b0b0);"></div>
<div class="abs" style="left:949.5px;top:880.5px;width:25.5px;height:21.5px;background:linear-gradient(180deg,#a0c41c,#86aa08);"></div>
<div class="abs" style="left:975px;top:880.5px;width:11.3px;height:21.5px;background:linear-gradient(180deg,#4f8de0,#3a78cc);"></div>
<div class="abs" style="left:976.3px;top:911.3px;width:13.5px;height:13.5px;background:linear-gradient(180deg,#dcdcdc,#b4b4b4);border:1px solid rgba(0,0,0,.18);"></div>
<div class="t" style="left:993.30px;top:912.44px;font-size:12px;color:#000;width:83.5px;overflow:hidden;letter-spacing:-.35px;">Зарезервировано</div>
<div class="t" style="left:993.30px;top:925.44px;font-size:12px;color:#000;letter-spacing:-0.104px;">аппаратно</div>
<div class="t" style="left:993.30px;top:938.44px;font-size:12px;color:#000;letter-spacing:-0.337px;">290 мегабайт</div>
<div class="abs" style="left:1083.3px;top:911.3px;width:13.5px;height:13.5px;background:linear-gradient(180deg,#a0c41c,#86aa08);border:1px solid rgba(0,0,0,.18);"></div>
<div class="t" style="left:1100.50px;top:912.44px;font-size:12px;color:#000;letter-spacing:-0.488px;">Используется</div>
<div class="t" style="left:1100.50px;top:925.44px;font-size:12px;color:#000;letter-spacing:-0.378px;">1478 мегабайт</div>
<div class="abs" style="left:1190px;top:911.3px;width:13.5px;height:13.5px;background:linear-gradient(180deg,#f5a020,#e08606);border:1px solid rgba(0,0,0,.18);"></div>
<div class="t" style="left:1207.50px;top:912.44px;font-size:12px;color:#000;letter-spacing:-0.395px;">Изменено</div>
<div class="t" style="left:1207.50px;top:925.44px;font-size:12px;color:#000;letter-spacing:-0.325px;">34 мегабайт</div>
<div class="abs" style="left:1297px;top:911.3px;width:13.5px;height:13.5px;background:linear-gradient(180deg,#4f8de0,#3a78cc);border:1px solid rgba(0,0,0,.18);"></div>
<div class="t" style="left:1314.50px;top:912.44px;font-size:12px;color:#000;letter-spacing:-0.219px;">Ожидание</div>
<div class="t" style="left:1314.50px;top:925.44px;font-size:12px;color:#000;letter-spacing:-0.379px;">580 мегабайт</div>
<div class="abs" style="left:1404.3px;top:911.3px;width:13.5px;height:13.5px;background:linear-gradient(180deg,#c6d9f5,#a8c2ec);border:1px solid rgba(0,0,0,.18);"></div>
<div class="t" style="left:1421.00px;top:912.44px;font-size:12px;color:#000;letter-spacing:-0.221px;">Свободно</div>
<div class="t" style="left:1421.00px;top:925.44px;font-size:12px;color:#000;letter-spacing:-0.349px;">30386 мегабайт</div>
<div class="t" style="left:1159.30px;top:959.64px;font-size:12px;color:#000;letter-spacing:-0.297px;">Доступно</div>
<div class="t" style="left:1240.91px;top:959.64px;font-size:12px;color:#000;letter-spacing:-0.385px;">30966 мегабайт</div>
<div class="t" style="left:1159.30px;top:972.44px;font-size:12px;color:#000;letter-spacing:-0.322px;">Кэшировано</div>
<div class="t" style="left:1252.96px;top:972.44px;font-size:12px;color:#000;letter-spacing:-0.337px;">614 мегабайт</div>
<div class="t" style="left:1159.30px;top:985.44px;font-size:12px;color:#000;letter-spacing:-0.634px;">Всего</div>
<div class="t" style="left:1240.91px;top:985.44px;font-size:12px;color:#000;letter-spacing:-0.385px;">32478 мегабайт</div>
<div class="t" style="left:1159.30px;top:998.44px;font-size:12px;color:#000;letter-spacing:-0.385px;">Установлено</div>
<div class="t" style="left:1240.91px;top:998.44px;font-size:12px;color:#000;letter-spacing:-0.385px;">32768 мегабайт</div>
<svg class="abs" style="left:1553px;top:638.5px;" width="9" height="6" viewBox="0 0 9 6"><path d="M.8 5 4.5 1.3 8.2 5" fill="none" stroke="#c4c4c4" stroke-width="1.6"/></svg>
<svg class="abs" style="left:1553px;top:1010.5px;" width="9" height="6" viewBox="0 0 9 6"><path d="M.8 1 4.5 4.7 8.2 1" fill="none" stroke="#c4c4c4" stroke-width="1.6"/></svg>
<div class="abs" style="left:1566px;top:632px;width:1px;height:390px;background:#9a9a9a;"></div>
<div class="abs" style="left:1572.5px;top:663px;width:199.5px;height:359px;background:#fff;border:1px solid #8a8a8a;border-top:none;border-bottom:none"></div>
<div class="abs" style="left:1572.5px;top:634px;width:199.5px;height:29.5px;background:linear-gradient(180deg,#fbfbfb 0,#ececec 30%,#d2d2d2 70%,#b4b4b4 100%);border:1px solid #6e6e6e;border-bottom-color:#9a9a9a;"></div>
<svg class="abs" style="left:1583.0px;top:638.8px;" width="19" height="19" viewBox="0 0 19 19"><defs><linearGradient id="cb" x1="0" y1="0" x2="0" y2="1"><stop offset="0" stop-color="#fff"/><stop offset="1" stop-color="#dcdcdc"/></linearGradient></defs><circle cx="9.5" cy="9.5" r="8.7" fill="url(#cb)" stroke="#8a8a8a" stroke-width="1"/><path d="M7.8 5.6 11.7 9.5 7.8 13.4" fill="none" stroke="#222" stroke-width="1.8"/></svg>
<div class="abs" style="left:1672.5px;top:637.5px;width:85px;height:22.5px;background:#e1e1e1;border:1px solid #d0d0d0;"></div>
<div class="t" style="left:1697.15px;top:642.94px;font-size:12px;color:#000;letter-spacing:-0.806px;">Вид</div>
<div class="abs" style="left:1744px;top:640px;width:1px;height:17px;background:#6a6a6a;"></div>
<svg class="abs" style="left:1745.5px;top:646px;" width="10" height="6" viewBox="0 0 10 6"><path d="M0 0H10L5 5.6z" fill="#000"/></svg>
<div class="t" style="left:1585.80px;top:669.94px;font-size:12px;color:#000;letter-spacing:-0.106px;">Использование физич...</div>
<div class="t" style="left:1722.87px;top:669.94px;font-size:12px;color:#000;letter-spacing:-0.926px;">100%</div>
<svg class="abs" style="left:1583.8px;top:686.3px;" width="169.3" height="100.8" viewBox="0 0 169.3 100.8"><rect width="169.3" height="100.8" fill="#000"/><path d="M10.75 0V100.8" stroke="#0b7a24" stroke-width="1"/><path d="M25.75 0V100.8" stroke="#0b7a24" stroke-width="1"/><path d="M40.75 0V100.8" stroke="#0b7a24" stroke-width="1"/><path d="M55.75 0V100.8" stroke="#0b7a24" stroke-width="1"/><path d="M70.75 0V100.8" stroke="#0b7a24" stroke-width="1"/><path d="M85.75 0V100.8" stroke="#0b7a24" stroke-width="1"/><path d="M100.75 0V100.8" stroke="#0b7a24" stroke-width="1"/><path d="M115.75 0V100.8" stroke="#0b7a24" stroke-width="1"/><path d="M130.75 0V100.8" stroke="#0b7a24" stroke-width="1"/><path d="M145.75 0V100.8" stroke="#0b7a24" stroke-width="1"/><path d="M160.75 0V100.8" stroke="#0b7a24" stroke-width="1"/><path d="M0 90.7H169.3" stroke="#0b7a24" stroke-width="1"/><path d="M0 80.6H169.3" stroke="#0b7a24" stroke-width="1"/><path d="M0 70.6H169.3" stroke="#0b7a24" stroke-width="1"/><path d="M0 60.5H169.3" stroke="#0b7a24" stroke-width="1"/><path d="M0 50.4H169.3" stroke="#0b7a24" stroke-width="1"/><path d="M0 40.3H169.3" stroke="#0b7a24" stroke-width="1"/><path d="M0 30.2H169.3" stroke="#0b7a24" stroke-width="1"/><path d="M0 20.2H169.3" stroke="#0b7a24" stroke-width="1"/><path d="M0 10.1H169.3" stroke="#0b7a24" stroke-width="1"/><path d="M107.5 100.8 111.500 97.2H169.3V100.8z" fill="#1c9a28"/><path d="M107.5 100.8 111.500 97.2H169.3" fill="none" stroke="#4be24b" stroke-width="1.2"/></svg>
<div class="t" style="left:1585.80px;top:791.14px;font-size:12px;color:#000;letter-spacing:-0.342px;">60 секунд</div>
<div class="t" style="left:1734.23px;top:791.14px;font-size:12px;color:#000;letter-spacing:-0.772px;">0%</div>
<div class="abs" style="left:1756.3px;top:675.5px;width:5px;height:1px;background:#333;"></div>
<div class="abs" style="left:1761px;top:675.5px;width:1px;height:123.5px;background:#333;"></div>
<div class="abs" style="left:1756.3px;top:798px;width:5px;height:1px;background:#333;"></div>
<div class="t" style="left:1585.80px;top:807.94px;font-size:12px;color:#000;letter-spacing:-0.222px;">Выделение памяти</div>
<div class="t" style="left:1722.87px;top:807.94px;font-size:12px;color:#000;letter-spacing:-0.926px;">100%</div>
<svg class="abs" style="left:1583.8px;top:824.8px;" width="169.3" height="100.8" viewBox="0 0 169.3 100.8"><rect width="169.3" height="100.8" fill="#000"/><path d="M10.75 0V100.8" stroke="#0b7a24" stroke-width="1"/><path d="M25.75 0V100.8" stroke="#0b7a24" stroke-width="1"/><path d="M40.75 0V100.8" stroke="#0b7a24" stroke-width="1"/><path d="M55.75 0V100.8" stroke="#0b7a24" stroke-width="1"/><path d="M70.75 0V100.8" stroke="#0b7a24" stroke-width="1"/><path d="M85.75 0V100.8" stroke="#0b7a24" stroke-width="1"/><path d="M100.75 0V100.8" stroke="#0b7a24" stroke-width="1"/><path d="M115.75 0V100.8" stroke="#0b7a24" stroke-width="1"/><path d="M130.75 0V100.8" stroke="#0b7a24" stroke-width="1"/><path d="M145.75 0V100.8" stroke="#0b7a24" stroke-width="1"/><path d="M160.75 0V100.8" stroke="#0b7a24" stroke-width="1"/><path d="M0 90.7H169.3" stroke="#0b7a24" stroke-width="1"/><path d="M0 80.6H169.3" stroke="#0b7a24" stroke-width="1"/><path d="M0 70.6H169.3" stroke="#0b7a24" stroke-width="1"/><path d="M0 60.5H169.3" stroke="#0b7a24" stroke-width="1"/><path d="M0 50.4H169.3" stroke="#0b7a24" stroke-width="1"/><path d="M0 40.3H169.3" stroke="#0b7a24" stroke-width="1"/><path d="M0 30.2H169.3" stroke="#0b7a24" stroke-width="1"/><path d="M0 20.2H169.3" stroke="#0b7a24" stroke-width="1"/><path d="M0 10.1H169.3" stroke="#0b7a24" stroke-width="1"/><path d="M107.5 100.8 111.500 97.2H169.3V100.8z" fill="#1c9a28"/><path d="M107.5 100.8 111.500 97.2H169.3" fill="none" stroke="#4be24b" stroke-width="1.2"/></svg>
<div class="t" style="left:1734.23px;top:929.14px;font-size:12px;color:#000;letter-spacing:-0.772px;">0%</div>
<div class="abs" style="left:1756.3px;top:813.5px;width:5px;height:1px;background:#333;"></div>
<div class="abs" style="left:1761px;top:813.5px;width:1px;height:123.5px;background:#333;"></div>
<div class="abs" style="left:1756.3px;top:936px;width:5px;height:1px;background:#333;"></div>
<div class="t" style="left:1585.30px;top:946.14px;font-size:12px;color:#000;">Ошибок страницы физи...</div>
<div class="t" style="left:1732.69px;top:946.14px;font-size:12px;color:#000;letter-spacing:-0.910px;">100</div>
<svg class="abs" style="left:1583.8px;top:963.3px;" width="169.3" height="58.700000000000045" viewBox="0 0 169.3 58.700000000000045"><rect width="169.3" height="100.8" fill="#000"/><path d="M10.75 0V100.8" stroke="#0b7a24" stroke-width="1"/><path d="M25.75 0V100.8" stroke="#0b7a24" stroke-width="1"/><path d="M40.75 0V100.8" stroke="#0b7a24" stroke-width="1"/><path d="M55.75 0V100.8" stroke="#0b7a24" stroke-width="1"/><path d="M70.75 0V100.8" stroke="#0b7a24" stroke-width="1"/><path d="M85.75 0V100.8" stroke="#0b7a24" stroke-width="1"/><path d="M100.75 0V100.8" stroke="#0b7a24" stroke-width="1"/><path d="M115.75 0V100.8" stroke="#0b7a24" stroke-width="1"/><path d="M130.75 0V100.8" stroke="#0b7a24" stroke-width="1"/><path d="M145.75 0V100.8" stroke="#0b7a24" stroke-width="1"/><path d="M160.75 0V100.8" stroke="#0b7a24" stroke-width="1"/><path d="M0 90.7H169.3" stroke="#0b7a24" stroke-width="1"/><path d="M0 80.6H169.3" stroke="#0b7a24" stroke-width="1"/><path d="M0 70.6H169.3" stroke="#0b7a24" stroke-width="1"/><path d="M0 60.5H169.3" stroke="#0b7a24" stroke-width="1"/><path d="M0 50.4H169.3" stroke="#0b7a24" stroke-width="1"/><path d="M0 40.3H169.3" stroke="#0b7a24" stroke-width="1"/><path d="M0 30.2H169.3" stroke="#0b7a24" stroke-width="1"/><path d="M0 20.2H169.3" stroke="#0b7a24" stroke-width="1"/><path d="M0 10.1H169.3" stroke="#0b7a24" stroke-width="1"/></svg>
<div class="abs" style="left:1756.3px;top:951.5px;width:5px;height:1px;background:#333;"></div>
<div class="abs" style="left:1761px;top:951.5px;width:1px;height:71px;background:#333;"></div>
<div class="abs" style="left:1772.5px;top:632px;width:17px;height:390px;background:#f0f0f0;"></div>
<svg class="abs" style="left:1777px;top:638.5px;" width="9" height="6" viewBox="0 0 9 6"><path d="M.8 5 4.5 1.3 8.2 5" fill="none" stroke="#444" stroke-width="1.6"/></svg>
<div class="abs" style="left:1774.5px;top:650px;width:14px;height:304px;background:#cdcdcd;"></div>
<svg class="abs" style="left:1777px;top:1010.5px;" width="9" height="6" viewBox="0 0 9 6"><path d="M.8 1 4.5 4.7 8.2 1" fill="none" stroke="#444" stroke-width="1.6"/></svg>
<div id="tb">
<div class="abs" style="left:0;top:0;width:47px;height:40px;background:#1f7fb6"></div>
<svg class="abs" style="left:14px;top:11px" width="20" height="20" viewBox="0 0 20 20"><path d="M0 2.8 8.2 1.7V9.4H0zM9.2 1.55 20 0V9.4H9.2zM0 10.4H8.2V18.2L0 17.1zM9.2 10.4H20V20L9.2 18.4z" fill="#fff"/></svg>
<svg class="abs" style="left:60px;top:9px" width="24" height="24" viewBox="0 0 24 24"><circle cx="14" cy="9.5" r="7.6" fill="none" stroke="#fff" stroke-width="2"/><path d="M8.6 15 1.5 22.2" stroke="#fff" stroke-width="2.4"/></svg>
<div class="abs" style="left:100px;top:1px;width:46px;height:38px;background:rgba(255,255,255,.2);box-shadow:inset 0 0 0 1px rgba(255,255,255,.25)"></div>
<div class="abs" style="left:149px;top:1px;width:46px;height:38px;background:rgba(255,255,255,.4);box-shadow:inset 0 0 0 1px rgba(255,255,255,.55)"></div>
<div class="abs" style="left:198px;top:1px;width:38px;height:38px;background:rgba(255,255,255,.2);box-shadow:inset 0 0 0 1px rgba(255,255,255,.25)"></div>
<div class="abs" style="left:237px;top:1px;width:3px;height:38px;background:rgba(255,255,255,.22);box-shadow:inset 0 0 0 1px rgba(255,255,255,.2)"></div>
<div class="abs" style="left:241px;top:1px;width:3px;height:38px;background:rgba(255,255,255,.22);box-shadow:inset 0 0 0 1px rgba(255,255,255,.2)"></div>
<svg class="abs" style="left:112px;top:8px;" width="23" height="23" viewBox="0 0 23 23"><circle cx="11.5" cy="11.5" r="10.6" fill="#efe9df" stroke="#a09888" stroke-width="1.6"/><circle cx="11.5" cy="11.5" r="8" fill="#fbf8f3" stroke="#d8cfc0" stroke-width=".8"/><path d="M6 5 8.6 4 16.5 17 14.6 18z" fill="#c8202a"/><path d="M11.5 3.5v2M11.5 17.5v2M3.5 11.5h2M17.500 11.5h2" stroke="#b0a898" stroke-width=".9"/></svg>
<svg class="abs" style="left:161px;top:9px;" width="23" height="22" viewBox="0 0 23 22"><rect x="0.5" y="6" width="4" height="10" fill="#aab4bc"/><rect x="4.500" y="1.500" width="17" height="12.500" fill="#e8f2f8" stroke="#8a98a4"/><path d="M6 9.500 8.500 5.500 11 10 13.500 5 16 8.500 19.500 6.500" fill="none" stroke="#2b8ad6" stroke-width="1.300"/><rect x="10" y="14.500" width="6" height="2.500" fill="#9aa6ae"/><rect x="6.500" y="17" width="13" height="2.500" fill="#c4ccd2"/></svg>
<svg class="abs" style="left:206px;top:9px;" width="23" height="21" viewBox="0 0 23 21"><path d="M0 2.500Q0 1.500 1 1.500H8L10 3.500H22Q23 3.500 23 4.500V20H0z" fill="#e8a92c"/><path d="M0 5.500H23V20.500H0z" fill="#fbd45a"/><path d="M5 20.500V12.500H18V20.500H14.500V16H8.500V20.500z" fill="#3a8ee0"/></svg>
<svg class="abs" style="left:1690px;top:15px" width="14" height="9" viewBox="0 0 14 9"><path d="M1 8 7 2 13 8" fill="none" stroke="#fff" stroke-width="1.3"/></svg>
<svg class="abs" style="left:1714px;top:12px" width="18" height="16" viewBox="0 0 18 16"><rect x="4.5" y="2.5" width="12" height="8" fill="none" stroke="#fff" stroke-width="1.1"/><path d="M10.5 10.5v3M7 14.5h7" stroke="#fff" stroke-width="1.1"/><rect x="1.5" y="1.5" width="4" height="4" fill="#2f6ab2" stroke="#fff" stroke-width="1"/><path d="M2.5 5.5v6h2" stroke="#fff" stroke-width="1" fill="none"/></svg>
<svg class="abs" style="left:1738px;top:12px" width="20" height="16" viewBox="0 0 20 16"><path d="M1.5 5.5h3l4-3.5v12l-4-3.5h-3z" fill="none" stroke="#fff" stroke-width="1.1"/><path d="M11 5.5q1.6 2.5 0 5M13.5 3.7q2.8 4.3 0 8.6M16 2q4 6 0 12" fill="none" stroke="#fff" stroke-width="1.1"/></svg>
<div class="t" style="left:1766px;top:14px;font-size:12px;color:#fff">РУС</div>
<div class="t" style="left:1803px;top:5px;width:50px;text-align:center;font-size:12px;color:#fff;letter-spacing:-.3px">16:10</div>
<div class="t" style="left:1798px;top:23px;width:60px;text-align:center;font-size:12px;color:#fff;letter-spacing:-.4px">15.04.2026</div>
<svg class="abs" style="left:1872px;top:11px" width="18" height="18" viewBox="0 0 18 18"><path d="M1.5 1.5h15v11h-5l-3 3.5v-3.5h-7z" fill="none" stroke="#fff" stroke-width="1.2"/></svg>
</div>
</body></html>
